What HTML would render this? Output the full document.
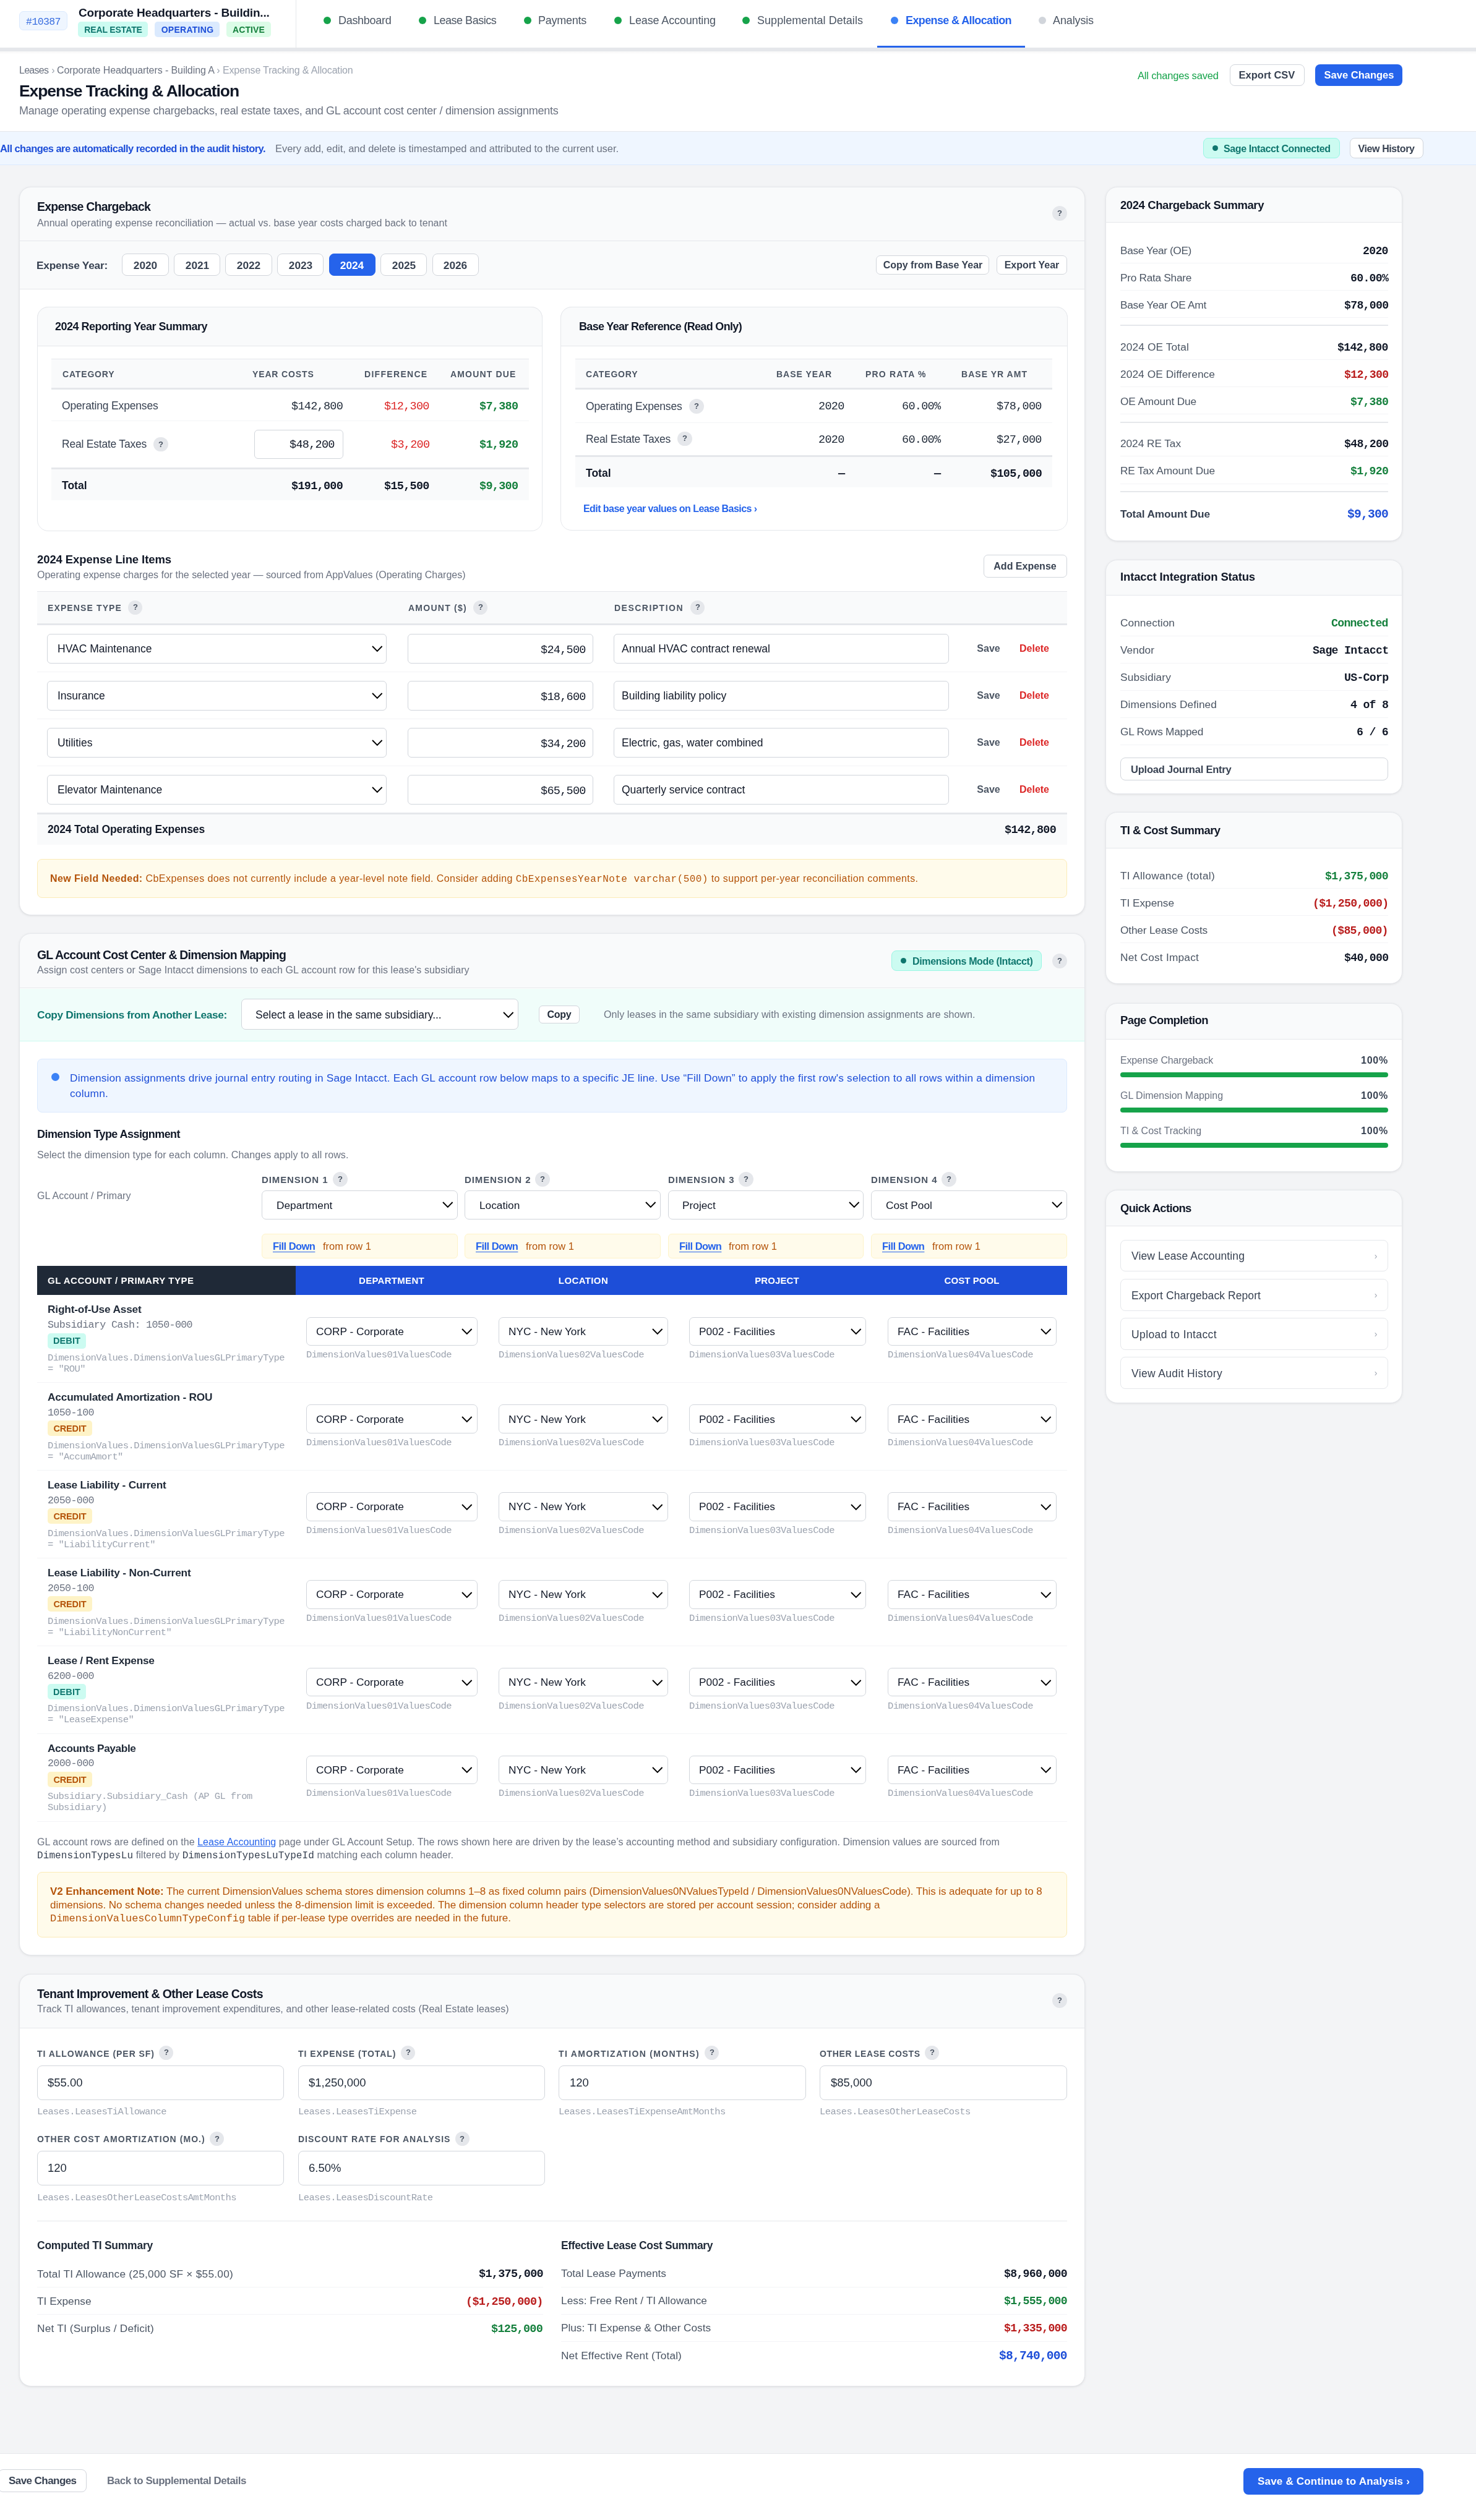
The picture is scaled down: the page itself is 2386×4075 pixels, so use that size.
<!DOCTYPE html>
<html><head><meta charset="utf-8"><title>Expense Tracking &amp; Allocation</title>
<style>
html,body{margin:0;padding:0;}
body{width:2386px;height:4075px;position:relative;overflow:hidden;background:#f3f4f6;font-family:'Liberation Sans', sans-serif;}
.a{position:absolute;box-sizing:border-box;}
.t{will-change:transform;}

</style></head><body>
<div class="a" style="left:0px;top:0px;width:2386px;height:77px;background:#ffffff;"></div>
<div class="a" style="left:0px;top:77px;width:2386px;height:6px;background:#e5e7eb;"></div>
<div class="a" style="left:31px;top:18px;width:78px;height:31px;background:#eff6ff;border:1px solid #dbeafe;border-radius:7px;"></div>
<div class="a t" style="top:25.00px;font-family:'Liberation Mono', monospace;font-size:16.59px;line-height:22px;font-weight:400;color:#3b6fe0;white-space:nowrap;letter-spacing:-0.6510000000000005px;left:-930px;width:2000px;text-align:center;">#10387</div>
<div class="a t" style="top:8.00px;font-family:'Liberation Sans', sans-serif;font-size:19px;line-height:25px;font-weight:700;color:#111827;white-space:nowrap;left:127px;letter-spacing:-0.202px;">Corporate Headquarters - Buildin...</div>
<div class="a" style="left:126px;top:35px;width:113px;height:25px;background:#ccfbf1;border-radius:5px;"></div>
<div class="a t" style="top:39.00px;font-family:'Liberation Sans', sans-serif;font-size:14px;line-height:18px;font-weight:700;color:#0f766e;white-space:nowrap;left:-817.5px;width:2000px;text-align:center;letter-spacing:-0.119px;">REAL ESTATE</div>
<div class="a" style="left:250px;top:35px;width:105px;height:25px;background:#dbeafe;border-radius:5px;"></div>
<div class="a t" style="top:39.00px;font-family:'Liberation Sans', sans-serif;font-size:14px;line-height:18px;font-weight:700;color:#1d4ed8;white-space:nowrap;left:-697.5px;width:2000px;text-align:center;letter-spacing:0.277px;">OPERATING</div>
<div class="a" style="left:366px;top:35px;width:72px;height:25px;background:#dcfce7;border-radius:5px;"></div>
<div class="a t" style="top:39.00px;font-family:'Liberation Sans', sans-serif;font-size:14px;line-height:18px;font-weight:700;color:#15803d;white-space:nowrap;left:-598.0px;width:2000px;text-align:center;letter-spacing:0.109px;">ACTIVE</div>
<div class="a" style="left:478px;top:0px;width:1px;height:77px;background:#e5e7eb;"></div>
<div class="a" style="left:523.0px;top:26.5px;width:12.0px;height:12.0px;background:#16a34a;border-radius:12px;"></div>
<div class="a t" style="top:22.00px;font-family:'Liberation Sans', sans-serif;font-size:18px;line-height:23px;font-weight:400;color:#4b5563;white-space:nowrap;left:546.5px;letter-spacing:-0.296px;">Dashboard</div>
<div class="a" style="left:677.4px;top:26.5px;width:12.0px;height:12.0px;background:#16a34a;border-radius:12px;"></div>
<div class="a t" style="top:22.00px;font-family:'Liberation Sans', sans-serif;font-size:18px;line-height:23px;font-weight:400;color:#4b5563;white-space:nowrap;left:700.9px;letter-spacing:-0.489px;">Lease Basics</div>
<div class="a" style="left:846.5px;top:26.5px;width:12.0px;height:12.0px;background:#16a34a;border-radius:12px;"></div>
<div class="a t" style="top:22.00px;font-family:'Liberation Sans', sans-serif;font-size:18px;line-height:23px;font-weight:400;color:#4b5563;white-space:nowrap;left:870.0px;letter-spacing:-0.256px;">Payments</div>
<div class="a" style="left:993.0px;top:26.5px;width:12.0px;height:12.0px;background:#16a34a;border-radius:12px;"></div>
<div class="a t" style="top:22.00px;font-family:'Liberation Sans', sans-serif;font-size:18px;line-height:23px;font-weight:400;color:#4b5563;white-space:nowrap;left:1016.5px;letter-spacing:-0.133px;">Lease Accounting</div>
<div class="a" style="left:1200.0px;top:26.5px;width:12.0px;height:12.0px;background:#16a34a;border-radius:12px;"></div>
<div class="a t" style="top:22.00px;font-family:'Liberation Sans', sans-serif;font-size:18px;line-height:23px;font-weight:400;color:#4b5563;white-space:nowrap;left:1223.5px;letter-spacing:0.045px;">Supplemental Details</div>
<div class="a" style="left:1440.0px;top:26.5px;width:12.0px;height:12.0px;background:#3b82f6;border-radius:12px;"></div>
<div class="a t" style="top:22.00px;font-family:'Liberation Sans', sans-serif;font-size:18px;line-height:23px;font-weight:700;color:#2563eb;white-space:nowrap;left:1463.5px;letter-spacing:-0.619px;">Expense &amp; Allocation</div>
<div class="a" style="left:1678.5px;top:26.5px;width:12.0px;height:12.0px;background:#d1d5db;border-radius:12px;"></div>
<div class="a t" style="top:22.00px;font-family:'Liberation Sans', sans-serif;font-size:18px;line-height:23px;font-weight:400;color:#4b5563;white-space:nowrap;left:1702.0px;letter-spacing:-0.129px;">Analysis</div>
<div class="a" style="left:1418px;top:74px;width:239px;height:3px;background:#2563eb;"></div>
<div class="a" style="left:0px;top:83px;width:2386px;height:129px;background:#ffffff;"></div>
<div class="a" style="left:0px;top:83px;width:2386px;height:5px;background:linear-gradient(rgba(0,0,0,0.03),rgba(0,0,0,0));"></div>
<div class="a" style="left:0px;top:212px;width:2386px;height:1px;background:#e5e7eb;"></div>
<div class="a t" style="top:103.00px;font-family:'Liberation Sans', sans-serif;font-size:16px;line-height:21px;font-weight:400;color:#6b7280;white-space:nowrap;left:31.3px;letter-spacing:-0.732px;">Leases</div>
<div class="a t" style="top:103.00px;font-family:'Liberation Sans', sans-serif;font-size:16px;line-height:21px;font-weight:400;color:#9ca3af;white-space:nowrap;left:-914.5px;width:2000px;text-align:center;">›</div>
<div class="a t" style="top:103.00px;font-family:'Liberation Sans', sans-serif;font-size:16px;line-height:21px;font-weight:400;color:#6b7280;white-space:nowrap;left:91.5px;letter-spacing:-0.089px;">Corporate Headquarters - Building A</div>
<div class="a t" style="top:103.00px;font-family:'Liberation Sans', sans-serif;font-size:16px;line-height:21px;font-weight:400;color:#9ca3af;white-space:nowrap;left:-647.2px;width:2000px;text-align:center;">›</div>
<div class="a t" style="top:103.00px;font-family:'Liberation Sans', sans-serif;font-size:16px;line-height:21px;font-weight:400;color:#9ca3af;white-space:nowrap;left:359.8px;letter-spacing:-0.163px;">Expense Tracking &amp; Allocation</div>
<div class="a t" style="top:130.00px;font-family:'Liberation Sans', sans-serif;font-size:26.5px;line-height:34px;font-weight:700;color:#111827;white-space:nowrap;left:31px;letter-spacing:-1.080px;">Expense Tracking &amp; Allocation</div>
<div class="a t" style="top:168.00px;font-family:'Liberation Sans', sans-serif;font-size:18px;line-height:23px;font-weight:400;color:#6b7280;white-space:nowrap;left:31px;letter-spacing:-0.266px;">Manage operating expense chargebacks, real estate taxes, and GL account cost center / dimension assignments</div>
<div class="a t" style="top:112.00px;font-family:'Liberation Sans', sans-serif;font-size:16.5px;line-height:21px;font-weight:400;color:#16a34a;white-space:nowrap;left:1839px;letter-spacing:-0.190px;">All changes saved</div>
<div class="a" style="left:1987.5px;top:103.7px;width:121.0px;height:35.7px;background:#fff;border:1px solid #d1d5db;border-radius:8px;"></div>
<div class="a t" style="top:111.00px;font-family:'Liberation Sans', sans-serif;font-size:16.5px;line-height:21px;font-weight:700;color:#374151;white-space:nowrap;left:1048px;width:2000px;text-align:center;">Export CSV</div>
<div class="a" style="left:2126px;top:104px;width:141px;height:35px;background:#2563eb;border-radius:8px;"></div>
<div class="a t" style="top:111.00px;font-family:'Liberation Sans', sans-serif;font-size:16.5px;line-height:21px;font-weight:700;color:#fff;white-space:nowrap;left:1196.5px;width:2000px;text-align:center;">Save Changes</div>
<div class="a" style="left:0px;top:213px;width:2386px;height:54px;background:#eff6ff;"></div>
<div class="a" style="left:0px;top:266px;width:2386px;height:1px;background:#dbeafe;"></div>
<div class="a t" style="top:230.00px;font-family:'Liberation Sans', sans-serif;font-size:16.5px;line-height:21px;font-weight:700;color:#1d4ed8;white-space:nowrap;left:0px;letter-spacing:-0.562px;">All changes are automatically recorded in the audit history.</div>
<div class="a t" style="top:230.00px;font-family:'Liberation Sans', sans-serif;font-size:16.5px;line-height:21px;font-weight:400;color:#6b7280;white-space:nowrap;left:444.8px;letter-spacing:-0.058px;">Every add, edit, and delete is timestamped and attributed to the current user.</div>
<div class="a" style="left:1945px;top:223px;width:221px;height:32.5px;background:#ccfbf1;border:1px solid #99f6e4;border-radius:8px;"></div>
<div class="a" style="left:1959.5px;top:235.0px;width:9.0px;height:9.0px;background:#0f766e;border-radius:9px;"></div>
<div class="a t" style="top:230.00px;font-family:'Liberation Sans', sans-serif;font-size:16px;line-height:21px;font-weight:700;color:#0f766e;white-space:nowrap;left:1978px;letter-spacing:-0.403px;">Sage Intacct Connected</div>
<div class="a" style="left:2182px;top:223px;width:118.5px;height:32.5px;background:#fff;border:1px solid #d1d5db;border-radius:8px;"></div>
<div class="a t" style="top:230.00px;font-family:'Liberation Sans', sans-serif;font-size:16px;line-height:21px;font-weight:700;color:#374151;white-space:nowrap;left:1241px;width:2000px;text-align:center;letter-spacing:-0.396px;">View History</div>
<div class="a" style="left:31px;top:302px;width:1723px;height:1178px;background:#fff;border:1px solid #e5e7eb;border-radius:19px;box-shadow:0 1px 4px rgba(0,0,0,0.07),0 1px 2px rgba(0,0,0,0.03);"></div>
<div class="a" style="left:31px;top:302px;width:1723px;height:88px;background:#f9fafb;border:1px solid #e5e7eb;border-radius:19px;border-bottom-left-radius:0;border-bottom-right-radius:0;"></div>
<div class="a t" style="top:322.00px;font-family:'Liberation Sans', sans-serif;font-size:19.5px;line-height:25px;font-weight:700;color:#111827;white-space:nowrap;left:60px;letter-spacing:-0.793px;">Expense Chargeback</div>
<div class="a t" style="top:350.00px;font-family:'Liberation Sans', sans-serif;font-size:16px;line-height:21px;font-weight:400;color:#6b7280;white-space:nowrap;left:60px;letter-spacing:0.033px;">Annual operating expense reconciliation — actual vs. base year costs charged back to tenant</div>
<div class="a" style="left:1700.6px;top:332.6px;width:24.0px;height:24.0px;background:#e5e7eb;border-radius:24px;"></div>
<div class="a t" style="top:336.00px;font-family:'Liberation Sans', sans-serif;font-size:13px;line-height:17px;font-weight:700;color:#4b5563;white-space:nowrap;left:712.5999999999999px;width:2000px;text-align:center;">?</div>
<div class="a" style="left:32px;top:390px;width:1721px;height:78px;background:#f9fafb;"></div>
<div class="a" style="left:32px;top:467px;width:1721px;height:1px;background:#e5e7eb;"></div>
<div class="a t" style="top:418.00px;font-family:'Liberation Sans', sans-serif;font-size:17.3px;line-height:22px;font-weight:700;color:#374151;white-space:nowrap;left:59.3px;letter-spacing:-0.220px;">Expense Year:</div>
<div class="a" style="left:197.3px;top:409.8px;width:75.40000000000003px;height:36.5px;background:#fff;border:1px solid #d1d5db;border-radius:8px;"></div>
<div class="a t" style="top:418.00px;font-family:'Liberation Sans', sans-serif;font-size:17.3px;line-height:22px;font-weight:600;color:#374151;white-space:nowrap;left:-765.0px;width:2000px;text-align:center;">2020</div>
<div class="a" style="left:280.85px;top:409.8px;width:75.39999999999998px;height:36.5px;background:#fff;border:1px solid #d1d5db;border-radius:8px;"></div>
<div class="a t" style="top:418.00px;font-family:'Liberation Sans', sans-serif;font-size:17.3px;line-height:22px;font-weight:600;color:#374151;white-space:nowrap;left:-681.45px;width:2000px;text-align:center;">2021</div>
<div class="a" style="left:364.4px;top:409.8px;width:75.39999999999998px;height:36.5px;background:#fff;border:1px solid #d1d5db;border-radius:8px;"></div>
<div class="a t" style="top:418.00px;font-family:'Liberation Sans', sans-serif;font-size:17.3px;line-height:22px;font-weight:600;color:#374151;white-space:nowrap;left:-597.9000000000001px;width:2000px;text-align:center;">2022</div>
<div class="a" style="left:447.95px;top:409.8px;width:75.40000000000003px;height:36.5px;background:#fff;border:1px solid #d1d5db;border-radius:8px;"></div>
<div class="a t" style="top:418.00px;font-family:'Liberation Sans', sans-serif;font-size:17.3px;line-height:22px;font-weight:600;color:#374151;white-space:nowrap;left:-514.35px;width:2000px;text-align:center;">2023</div>
<div class="a" style="left:531.5px;top:409.8px;width:75.39999999999998px;height:36.5px;background:#2563eb;border:1px solid #2563eb;border-radius:8px;"></div>
<div class="a t" style="top:418.00px;font-family:'Liberation Sans', sans-serif;font-size:17.3px;line-height:22px;font-weight:600;color:#fff;white-space:nowrap;left:-430.79999999999995px;width:2000px;text-align:center;">2024</div>
<div class="a" style="left:615.05px;top:409.8px;width:75.39999999999998px;height:36.5px;background:#fff;border:1px solid #d1d5db;border-radius:8px;"></div>
<div class="a t" style="top:418.00px;font-family:'Liberation Sans', sans-serif;font-size:17.3px;line-height:22px;font-weight:600;color:#374151;white-space:nowrap;left:-347.25px;width:2000px;text-align:center;">2025</div>
<div class="a" style="left:698.5999999999999px;top:409.8px;width:75.39999999999998px;height:36.5px;background:#fff;border:1px solid #d1d5db;border-radius:8px;"></div>
<div class="a t" style="top:418.00px;font-family:'Liberation Sans', sans-serif;font-size:17.3px;line-height:22px;font-weight:600;color:#374151;white-space:nowrap;left:-263.70000000000005px;width:2000px;text-align:center;">2026</div>
<div class="a" style="left:1416px;top:413px;width:183px;height:30.5px;background:#fff;border:1px solid #d1d5db;border-radius:7px;"></div>
<div class="a t" style="top:418.00px;font-family:'Liberation Sans', sans-serif;font-size:16px;line-height:21px;font-weight:700;color:#374151;white-space:nowrap;left:507.5px;width:2000px;text-align:center;">Copy from Base Year</div>
<div class="a" style="left:1611px;top:413px;width:113.70000000000005px;height:30.5px;background:#fff;border:1px solid #d1d5db;border-radius:7px;"></div>
<div class="a t" style="top:418.00px;font-family:'Liberation Sans', sans-serif;font-size:16px;line-height:21px;font-weight:700;color:#374151;white-space:nowrap;left:667.8499999999999px;width:2000px;text-align:center;">Export Year</div>
<div class="a" style="left:60px;top:496px;width:817px;height:363px;background:#fff;border:1px solid #e5e7eb;border-radius:18px;"></div>
<div class="a" style="left:60px;top:496px;width:817px;height:64px;background:#f9fafb;border:1px solid #e5e7eb;border-radius:18px;border-bottom-left-radius:0;border-bottom-right-radius:0;"></div>
<div class="a t" style="top:517.00px;font-family:'Liberation Sans', sans-serif;font-size:18px;line-height:23px;font-weight:700;color:#111827;white-space:nowrap;left:89px;letter-spacing:-0.511px;">2024 Reporting Year Summary</div>
<div class="a" style="left:83px;top:580px;width:772px;height:47px;background:#f9fafb;"></div>
<div class="a" style="left:83px;top:580px;width:772px;height:1px;background:#e5e7eb;"></div>
<div class="a" style="left:83px;top:627px;width:772px;height:3px;background:#e5e7eb;"></div>
<div class="a t" style="top:596.00px;font-family:'Liberation Sans', sans-serif;font-size:14px;line-height:18px;font-weight:700;color:#4b5563;white-space:nowrap;left:100.6px;letter-spacing:0.827px;">CATEGORY</div>
<div class="a t" style="top:596.00px;font-family:'Liberation Sans', sans-serif;font-size:14px;line-height:18px;font-weight:700;color:#4b5563;white-space:nowrap;left:408.4px;letter-spacing:0.858px;">YEAR COSTS</div>
<div class="a t" style="top:596.00px;font-family:'Liberation Sans', sans-serif;font-size:14px;line-height:18px;font-weight:700;color:#4b5563;white-space:nowrap;left:588.8px;letter-spacing:1.305px;">DIFFERENCE</div>
<div class="a t" style="top:596.00px;font-family:'Liberation Sans', sans-serif;font-size:14px;line-height:18px;font-weight:700;color:#4b5563;white-space:nowrap;left:728.4px;letter-spacing:1.171px;">AMOUNT DUE</div>
<div class="a t" style="top:645.00px;font-family:'Liberation Sans', sans-serif;font-size:17.5px;line-height:23px;font-weight:400;color:#374151;white-space:nowrap;left:100.3px;letter-spacing:-0.165px;">Operating Expenses</div>
<div class="a t" style="top:646.00px;font-family:'Liberation Mono', monospace;font-size:18.54px;line-height:24px;font-weight:400;color:#1f2937;white-space:nowrap;letter-spacing:-0.7278600000000004px;right:1831.4px;">$142,800</div>
<div class="a t" style="top:646.00px;font-family:'Liberation Mono', monospace;font-size:18.54px;line-height:24px;font-weight:400;color:#dc2626;white-space:nowrap;letter-spacing:-0.7278600000000004px;right:1692px;">$12,300</div>
<div class="a t" style="top:646.00px;font-family:'Liberation Mono', monospace;font-size:18.54px;line-height:24px;font-weight:700;color:#15803d;white-space:nowrap;letter-spacing:-0.7278600000000004px;right:1548.5px;">$7,380</div>
<div class="a" style="left:83px;top:680px;width:772px;height:1px;background:#f3f4f6;"></div>
<div class="a t" style="top:707.00px;font-family:'Liberation Sans', sans-serif;font-size:17.5px;line-height:23px;font-weight:400;color:#374151;white-space:nowrap;left:100.3px;letter-spacing:-0.220px;">Real Estate Taxes</div>
<div class="a" style="left:248.09999999999997px;top:706.9000000000001px;width:23.600000000000023px;height:23.59999999999991px;background:#e5e7eb;border-radius:23.6px;"></div>
<div class="a t" style="top:710.00px;font-family:'Liberation Sans', sans-serif;font-size:13px;line-height:17px;font-weight:700;color:#4b5563;white-space:nowrap;left:-740.1px;width:2000px;text-align:center;">?</div>
<div class="a" style="left:411.3px;top:695px;width:143.3px;height:47.299999999999955px;background:#fff;border:1px solid #d1d5db;border-radius:6px;"></div>
<div class="a t" style="top:708.00px;font-family:'Liberation Mono', monospace;font-size:18.54px;line-height:24px;font-weight:400;color:#111827;white-space:nowrap;letter-spacing:-0.7278600000000004px;right:1845px;">$48,200</div>
<div class="a t" style="top:708.00px;font-family:'Liberation Mono', monospace;font-size:18.54px;line-height:24px;font-weight:400;color:#dc2626;white-space:nowrap;letter-spacing:-0.7278600000000004px;right:1692px;">$3,200</div>
<div class="a t" style="top:708.00px;font-family:'Liberation Mono', monospace;font-size:18.54px;line-height:24px;font-weight:700;color:#15803d;white-space:nowrap;letter-spacing:-0.7278600000000004px;right:1548.5px;">$1,920</div>
<div class="a" style="left:83px;top:756px;width:772px;height:53px;background:#f9fafb;"></div>
<div class="a" style="left:83px;top:756px;width:772px;height:3px;background:#e5e7eb;"></div>
<div class="a t" style="top:774.00px;font-family:'Liberation Sans', sans-serif;font-size:17.5px;line-height:23px;font-weight:700;color:#111827;white-space:nowrap;left:100.3px;">Total</div>
<div class="a t" style="top:775.00px;font-family:'Liberation Mono', monospace;font-size:18.54px;line-height:24px;font-weight:700;color:#111827;white-space:nowrap;letter-spacing:-0.7278600000000004px;right:1831.4px;">$191,000</div>
<div class="a t" style="top:775.00px;font-family:'Liberation Mono', monospace;font-size:18.54px;line-height:24px;font-weight:700;color:#111827;white-space:nowrap;letter-spacing:-0.7278600000000004px;right:1692px;">$15,500</div>
<div class="a t" style="top:775.00px;font-family:'Liberation Mono', monospace;font-size:18.54px;line-height:24px;font-weight:700;color:#15803d;white-space:nowrap;letter-spacing:-0.7278600000000004px;right:1548.5px;">$9,300</div>
<div class="a" style="left:906px;top:496px;width:819.5px;height:361.5px;background:#fff;border:1px solid #e5e7eb;border-radius:18px;"></div>
<div class="a" style="left:906px;top:496px;width:819.5px;height:64px;background:#f9fafb;border:1px solid #e5e7eb;border-radius:18px;border-bottom-left-radius:0;border-bottom-right-radius:0;"></div>
<div class="a t" style="top:517.00px;font-family:'Liberation Sans', sans-serif;font-size:18px;line-height:23px;font-weight:700;color:#111827;white-space:nowrap;left:936px;letter-spacing:-0.671px;">Base Year Reference (Read Only)</div>
<div class="a" style="left:930px;top:580px;width:771px;height:47px;background:#f9fafb;"></div>
<div class="a" style="left:930px;top:580px;width:771px;height:1px;background:#e5e7eb;"></div>
<div class="a" style="left:930px;top:627px;width:771px;height:3px;background:#e5e7eb;"></div>
<div class="a t" style="top:596.00px;font-family:'Liberation Sans', sans-serif;font-size:14px;line-height:18px;font-weight:700;color:#4b5563;white-space:nowrap;left:946.6px;letter-spacing:0.827px;">CATEGORY</div>
<div class="a t" style="top:596.00px;font-family:'Liberation Sans', sans-serif;font-size:14px;line-height:18px;font-weight:700;color:#4b5563;white-space:nowrap;left:1254.8px;letter-spacing:0.974px;">BASE YEAR</div>
<div class="a t" style="top:596.00px;font-family:'Liberation Sans', sans-serif;font-size:14px;line-height:18px;font-weight:700;color:#4b5563;white-space:nowrap;left:1399px;letter-spacing:1.184px;">PRO RATA %</div>
<div class="a t" style="top:596.00px;font-family:'Liberation Sans', sans-serif;font-size:14px;line-height:18px;font-weight:700;color:#4b5563;white-space:nowrap;left:1554px;letter-spacing:1.028px;">BASE YR AMT</div>
<div class="a t" style="top:646.00px;font-family:'Liberation Sans', sans-serif;font-size:17.5px;line-height:23px;font-weight:400;color:#374151;white-space:nowrap;left:946.6px;letter-spacing:-0.165px;">Operating Expenses</div>
<div class="a" style="left:1114.0px;top:645.0px;width:23.59999999999991px;height:23.59999999999991px;background:#e5e7eb;border-radius:23.6px;"></div>
<div class="a t" style="top:648.00px;font-family:'Liberation Sans', sans-serif;font-size:13px;line-height:17px;font-weight:700;color:#4b5563;white-space:nowrap;left:125.79999999999995px;width:2000px;text-align:center;">?</div>
<div class="a t" style="top:646.00px;font-family:'Liberation Mono', monospace;font-size:18.54px;line-height:24px;font-weight:400;color:#1f2937;white-space:nowrap;letter-spacing:-0.7278600000000004px;right:1021px;">2020</div>
<div class="a t" style="top:646.00px;font-family:'Liberation Mono', monospace;font-size:18.54px;line-height:24px;font-weight:400;color:#1f2937;white-space:nowrap;letter-spacing:-0.7278600000000004px;right:866px;">60.00%</div>
<div class="a t" style="top:646.00px;font-family:'Liberation Mono', monospace;font-size:18.54px;line-height:24px;font-weight:400;color:#1f2937;white-space:nowrap;letter-spacing:-0.7278600000000004px;right:702px;">$78,000</div>
<div class="a" style="left:930px;top:683px;width:771px;height:1px;background:#f3f4f6;"></div>
<div class="a t" style="top:699.00px;font-family:'Liberation Sans', sans-serif;font-size:17.5px;line-height:23px;font-weight:400;color:#374151;white-space:nowrap;left:946.6px;letter-spacing:-0.220px;">Real Estate Taxes</div>
<div class="a" style="left:1095.1000000000001px;top:697.5px;width:23.59999999999991px;height:23.59999999999991px;background:#e5e7eb;border-radius:23.6px;"></div>
<div class="a t" style="top:700.00px;font-family:'Liberation Sans', sans-serif;font-size:13px;line-height:17px;font-weight:700;color:#4b5563;white-space:nowrap;left:106.90000000000009px;width:2000px;text-align:center;">?</div>
<div class="a t" style="top:700.00px;font-family:'Liberation Mono', monospace;font-size:18.54px;line-height:24px;font-weight:400;color:#1f2937;white-space:nowrap;letter-spacing:-0.7278600000000004px;right:1021px;">2020</div>
<div class="a t" style="top:700.00px;font-family:'Liberation Mono', monospace;font-size:18.54px;line-height:24px;font-weight:400;color:#1f2937;white-space:nowrap;letter-spacing:-0.7278600000000004px;right:866px;">60.00%</div>
<div class="a t" style="top:700.00px;font-family:'Liberation Mono', monospace;font-size:18.54px;line-height:24px;font-weight:400;color:#1f2937;white-space:nowrap;letter-spacing:-0.7278600000000004px;right:702px;">$27,000</div>
<div class="a" style="left:930px;top:736px;width:771px;height:52px;background:#f9fafb;"></div>
<div class="a" style="left:930px;top:736px;width:771px;height:3px;background:#e5e7eb;"></div>
<div class="a t" style="top:754.00px;font-family:'Liberation Sans', sans-serif;font-size:17.5px;line-height:23px;font-weight:700;color:#111827;white-space:nowrap;left:946.6px;">Total</div>
<div class="a t" style="top:755.00px;font-family:'Liberation Mono', monospace;font-size:18.54px;line-height:24px;font-weight:700;color:#111827;white-space:nowrap;letter-spacing:-0.7278600000000004px;right:1021px;">—</div>
<div class="a t" style="top:755.00px;font-family:'Liberation Mono', monospace;font-size:18.54px;line-height:24px;font-weight:700;color:#111827;white-space:nowrap;letter-spacing:-0.7278600000000004px;right:866px;">—</div>
<div class="a t" style="top:755.00px;font-family:'Liberation Mono', monospace;font-size:18.54px;line-height:24px;font-weight:700;color:#111827;white-space:nowrap;letter-spacing:-0.7278600000000004px;right:702px;">$105,000</div>
<div class="a t" style="top:812.00px;font-family:'Liberation Sans', sans-serif;font-size:16px;line-height:21px;font-weight:700;color:#2563eb;white-space:nowrap;left:942.5px;letter-spacing:-0.561px;">Edit base year values on Lease Basics ›</div>
<div class="a t" style="top:893.00px;font-family:'Liberation Sans', sans-serif;font-size:18.5px;line-height:24px;font-weight:700;color:#111827;white-space:nowrap;left:60px;letter-spacing:-0.088px;">2024 Expense Line Items</div>
<div class="a t" style="top:919.00px;font-family:'Liberation Sans', sans-serif;font-size:16px;line-height:21px;font-weight:400;color:#6b7280;white-space:nowrap;left:60px;letter-spacing:-0.020px;">Operating expense charges for the selected year — sourced from AppValues (Operating Charges)</div>
<div class="a" style="left:1589.6px;top:897px;width:135.0px;height:36.700000000000045px;background:#fff;border:1px solid #d1d5db;border-radius:7px;"></div>
<div class="a t" style="top:905.00px;font-family:'Liberation Sans', sans-serif;font-size:16px;line-height:21px;font-weight:700;color:#374151;white-space:nowrap;left:657.0999999999999px;width:2000px;text-align:center;">Add Expense</div>
<div class="a" style="left:60px;top:956px;width:1664.6px;height:52px;background:#f9fafb;"></div>
<div class="a" style="left:60px;top:956px;width:1664.6px;height:1px;background:#e5e7eb;"></div>
<div class="a" style="left:60px;top:1008px;width:1664.6px;height:3px;background:#e5e7eb;"></div>
<div class="a t" style="top:974.00px;font-family:'Liberation Sans', sans-serif;font-size:14px;line-height:18px;font-weight:700;color:#4b5563;white-space:nowrap;left:77px;letter-spacing:1.117px;">EXPENSE TYPE</div>
<div class="a" style="left:206.79999999999998px;top:970.7px;width:23.600000000000023px;height:23.59999999999991px;background:#e5e7eb;border-radius:23.6px;"></div>
<div class="a t" style="top:973.00px;font-family:'Liberation Sans', sans-serif;font-size:13px;line-height:17px;font-weight:700;color:#4b5563;white-space:nowrap;left:-781.4px;width:2000px;text-align:center;">?</div>
<div class="a t" style="top:974.00px;font-family:'Liberation Sans', sans-serif;font-size:14px;line-height:18px;font-weight:700;color:#4b5563;white-space:nowrap;left:659.5px;letter-spacing:1.256px;">AMOUNT ($)</div>
<div class="a" style="left:764.8000000000001px;top:970.7px;width:23.59999999999991px;height:23.59999999999991px;background:#e5e7eb;border-radius:23.6px;"></div>
<div class="a t" style="top:973.00px;font-family:'Liberation Sans', sans-serif;font-size:13px;line-height:17px;font-weight:700;color:#4b5563;white-space:nowrap;left:-223.39999999999998px;width:2000px;text-align:center;">?</div>
<div class="a t" style="top:974.00px;font-family:'Liberation Sans', sans-serif;font-size:14px;line-height:18px;font-weight:700;color:#4b5563;white-space:nowrap;left:992.6px;letter-spacing:1.483px;">DESCRIPTION</div>
<div class="a" style="left:1115.8px;top:970.7px;width:23.59999999999991px;height:23.59999999999991px;background:#e5e7eb;border-radius:23.6px;"></div>
<div class="a t" style="top:973.00px;font-family:'Liberation Sans', sans-serif;font-size:13px;line-height:17px;font-weight:700;color:#4b5563;white-space:nowrap;left:127.59999999999991px;width:2000px;text-align:center;">?</div>
<div class="a" style="left:76px;top:1025px;width:549.3px;height:48px;background:#fff;border:1px solid #d1d5db;border-radius:6px;"></div>
<div class="a t" style="top:1038.00px;font-family:'Liberation Sans', sans-serif;font-size:17.5px;line-height:23px;font-weight:400;color:#111827;white-space:nowrap;left:92.5px;">HVAC Maintenance</div>
<svg class="a" style="left:599.0px;top:1041.6999999999998px" width="21.6" height="13.8"><polyline points="3,3 10.8,10.8 18.6,3" fill="none" stroke="#000" stroke-width="1.9" stroke-linecap="butt" stroke-linejoin="miter"/></svg>
<div class="a" style="left:659px;top:1025px;width:300px;height:48px;background:#fff;border:1px solid #d1d5db;border-radius:6px;"></div>
<div class="a t" style="top:1040.00px;font-family:'Liberation Mono', monospace;font-size:18.54px;line-height:24px;font-weight:400;color:#111827;white-space:nowrap;letter-spacing:-0.7278600000000004px;right:1439.4px;">$24,500</div>
<div class="a" style="left:992px;top:1025px;width:541.5999999999999px;height:48px;background:#fff;border:1px solid #d1d5db;border-radius:6px;"></div>
<div class="a t" style="top:1038.00px;font-family:'Liberation Sans', sans-serif;font-size:17.5px;line-height:23px;font-weight:400;color:#111827;white-space:nowrap;left:1004.8px;">Annual HVAC contract renewal</div>
<div class="a t" style="top:1038.00px;font-family:'Liberation Sans', sans-serif;font-size:16px;line-height:21px;font-weight:700;color:#4b5563;white-space:nowrap;left:597.5999999999999px;width:2000px;text-align:center;">Save</div>
<div class="a t" style="top:1038.00px;font-family:'Liberation Sans', sans-serif;font-size:16px;line-height:21px;font-weight:700;color:#dc2626;white-space:nowrap;left:671.8px;width:2000px;text-align:center;">Delete</div>
<div class="a" style="left:60px;top:1086.3px;width:1664.6px;height:1.0px;background:#f3f4f6;"></div>
<div class="a" style="left:76px;top:1101px;width:549.3px;height:48px;background:#fff;border:1px solid #d1d5db;border-radius:6px;"></div>
<div class="a t" style="top:1114.00px;font-family:'Liberation Sans', sans-serif;font-size:17.5px;line-height:23px;font-weight:400;color:#111827;white-space:nowrap;left:92.5px;">Insurance</div>
<svg class="a" style="left:599.0px;top:1117.6999999999998px" width="21.6" height="13.8"><polyline points="3,3 10.8,10.8 18.6,3" fill="none" stroke="#000" stroke-width="1.9" stroke-linecap="butt" stroke-linejoin="miter"/></svg>
<div class="a" style="left:659px;top:1101px;width:300px;height:48px;background:#fff;border:1px solid #d1d5db;border-radius:6px;"></div>
<div class="a t" style="top:1116.00px;font-family:'Liberation Mono', monospace;font-size:18.54px;line-height:24px;font-weight:400;color:#111827;white-space:nowrap;letter-spacing:-0.7278600000000004px;right:1439.4px;">$18,600</div>
<div class="a" style="left:992px;top:1101px;width:541.5999999999999px;height:48px;background:#fff;border:1px solid #d1d5db;border-radius:6px;"></div>
<div class="a t" style="top:1114.00px;font-family:'Liberation Sans', sans-serif;font-size:17.5px;line-height:23px;font-weight:400;color:#111827;white-space:nowrap;left:1004.8px;">Building liability policy</div>
<div class="a t" style="top:1114.00px;font-family:'Liberation Sans', sans-serif;font-size:16px;line-height:21px;font-weight:700;color:#4b5563;white-space:nowrap;left:597.5999999999999px;width:2000px;text-align:center;">Save</div>
<div class="a t" style="top:1114.00px;font-family:'Liberation Sans', sans-serif;font-size:16px;line-height:21px;font-weight:700;color:#dc2626;white-space:nowrap;left:671.8px;width:2000px;text-align:center;">Delete</div>
<div class="a" style="left:60px;top:1162.3px;width:1664.6px;height:1.0px;background:#f3f4f6;"></div>
<div class="a" style="left:76px;top:1177px;width:549.3px;height:48px;background:#fff;border:1px solid #d1d5db;border-radius:6px;"></div>
<div class="a t" style="top:1190.00px;font-family:'Liberation Sans', sans-serif;font-size:17.5px;line-height:23px;font-weight:400;color:#111827;white-space:nowrap;left:92.5px;">Utilities</div>
<svg class="a" style="left:599.0px;top:1193.6999999999998px" width="21.6" height="13.8"><polyline points="3,3 10.8,10.8 18.6,3" fill="none" stroke="#000" stroke-width="1.9" stroke-linecap="butt" stroke-linejoin="miter"/></svg>
<div class="a" style="left:659px;top:1177px;width:300px;height:48px;background:#fff;border:1px solid #d1d5db;border-radius:6px;"></div>
<div class="a t" style="top:1192.00px;font-family:'Liberation Mono', monospace;font-size:18.54px;line-height:24px;font-weight:400;color:#111827;white-space:nowrap;letter-spacing:-0.7278600000000004px;right:1439.4px;">$34,200</div>
<div class="a" style="left:992px;top:1177px;width:541.5999999999999px;height:48px;background:#fff;border:1px solid #d1d5db;border-radius:6px;"></div>
<div class="a t" style="top:1190.00px;font-family:'Liberation Sans', sans-serif;font-size:17.5px;line-height:23px;font-weight:400;color:#111827;white-space:nowrap;left:1004.8px;">Electric, gas, water combined</div>
<div class="a t" style="top:1190.00px;font-family:'Liberation Sans', sans-serif;font-size:16px;line-height:21px;font-weight:700;color:#4b5563;white-space:nowrap;left:597.5999999999999px;width:2000px;text-align:center;">Save</div>
<div class="a t" style="top:1190.00px;font-family:'Liberation Sans', sans-serif;font-size:16px;line-height:21px;font-weight:700;color:#dc2626;white-space:nowrap;left:671.8px;width:2000px;text-align:center;">Delete</div>
<div class="a" style="left:60px;top:1238.3px;width:1664.6px;height:1.0px;background:#f3f4f6;"></div>
<div class="a" style="left:76px;top:1253px;width:549.3px;height:48px;background:#fff;border:1px solid #d1d5db;border-radius:6px;"></div>
<div class="a t" style="top:1266.00px;font-family:'Liberation Sans', sans-serif;font-size:17.5px;line-height:23px;font-weight:400;color:#111827;white-space:nowrap;left:92.5px;">Elevator Maintenance</div>
<svg class="a" style="left:599.0px;top:1269.6999999999998px" width="21.6" height="13.8"><polyline points="3,3 10.8,10.8 18.6,3" fill="none" stroke="#000" stroke-width="1.9" stroke-linecap="butt" stroke-linejoin="miter"/></svg>
<div class="a" style="left:659px;top:1253px;width:300px;height:48px;background:#fff;border:1px solid #d1d5db;border-radius:6px;"></div>
<div class="a t" style="top:1268.00px;font-family:'Liberation Mono', monospace;font-size:18.54px;line-height:24px;font-weight:400;color:#111827;white-space:nowrap;letter-spacing:-0.7278600000000004px;right:1439.4px;">$65,500</div>
<div class="a" style="left:992px;top:1253px;width:541.5999999999999px;height:48px;background:#fff;border:1px solid #d1d5db;border-radius:6px;"></div>
<div class="a t" style="top:1266.00px;font-family:'Liberation Sans', sans-serif;font-size:17.5px;line-height:23px;font-weight:400;color:#111827;white-space:nowrap;left:1004.8px;">Quarterly service contract</div>
<div class="a t" style="top:1266.00px;font-family:'Liberation Sans', sans-serif;font-size:16px;line-height:21px;font-weight:700;color:#4b5563;white-space:nowrap;left:597.5999999999999px;width:2000px;text-align:center;">Save</div>
<div class="a t" style="top:1266.00px;font-family:'Liberation Sans', sans-serif;font-size:16px;line-height:21px;font-weight:700;color:#dc2626;white-space:nowrap;left:671.8px;width:2000px;text-align:center;">Delete</div>
<div class="a" style="left:60px;top:1313.8px;width:1664.6px;height:51.90000000000009px;background:#f9fafb;"></div>
<div class="a" style="left:60px;top:1313.8px;width:1664.6px;height:3.0px;background:#e5e7eb;"></div>
<div class="a t" style="top:1330.00px;font-family:'Liberation Sans', sans-serif;font-size:17.5px;line-height:23px;font-weight:700;color:#111827;white-space:nowrap;left:77px;letter-spacing:-0.151px;">2024 Total Operating Expenses</div>
<div class="a t" style="top:1331.00px;font-family:'Liberation Mono', monospace;font-size:18.54px;line-height:24px;font-weight:700;color:#111827;white-space:nowrap;letter-spacing:-0.7278600000000004px;right:678.5px;">$142,800</div>
<div class="a" style="left:60px;top:1389px;width:1664.6px;height:63px;background:#fffbeb;border:1px solid #fcebb6;border-radius:8px;"></div>
<div class="a t" style="top:1410.00px;font-family:'Liberation Sans', sans-serif;font-size:16px;line-height:21px;font-weight:400;color:#b45309;white-space:nowrap;left:80.5px;letter-spacing:0.434px;"><b>New Field Needed:</b> CbExpenses does not currently include a year-level note field. Consider adding <span style="font-family:Liberation Mono">CbExpensesYearNote varchar(500)</span> to support per-year reconciliation comments.</div>
<div class="a" style="left:1787.4px;top:302px;width:479.5999999999999px;height:573px;background:#fff;border:1px solid #e5e7eb;border-radius:19px;box-shadow:0 1px 4px rgba(0,0,0,0.07),0 1px 2px rgba(0,0,0,0.03);"></div>
<div class="a" style="left:1787.4px;top:302px;width:479.5999999999999px;height:57.69999999999999px;background:#f9fafb;border:1px solid #e5e7eb;border-radius:19px;border-bottom-left-radius:0;border-bottom-right-radius:0;"></div>
<div class="a t" style="top:320.00px;font-family:'Liberation Sans', sans-serif;font-size:18.5px;line-height:24px;font-weight:700;color:#111827;white-space:nowrap;left:1811px;letter-spacing:-0.420px;">2024 Chargeback Summary</div>
<div class="a t" style="top:394.00px;font-family:'Liberation Sans', sans-serif;font-size:17.3px;line-height:22px;font-weight:400;color:#4b5563;white-space:nowrap;left:1811px;letter-spacing:-0.363px;">Base Year (OE)</div>
<div class="a t" style="top:394.00px;font-family:'Liberation Mono', monospace;font-size:18.19px;line-height:24px;font-weight:700;color:#111827;white-space:nowrap;letter-spacing:-0.7140000000000007px;right:142px;">2020</div>
<div class="a" style="left:1811px;top:425.2px;width:433px;height:1.0px;background:#f3f4f6;"></div>
<div class="a t" style="top:438.00px;font-family:'Liberation Sans', sans-serif;font-size:17.3px;line-height:22px;font-weight:400;color:#4b5563;white-space:nowrap;left:1811px;letter-spacing:-0.295px;">Pro Rata Share</div>
<div class="a t" style="top:438.00px;font-family:'Liberation Mono', monospace;font-size:18.19px;line-height:24px;font-weight:700;color:#111827;white-space:nowrap;letter-spacing:-0.7140000000000007px;right:142px;">60.00%</div>
<div class="a" style="left:1811px;top:468.8px;width:433px;height:1.0px;background:#f3f4f6;"></div>
<div class="a t" style="top:482.00px;font-family:'Liberation Sans', sans-serif;font-size:17.3px;line-height:22px;font-weight:400;color:#4b5563;white-space:nowrap;left:1811px;letter-spacing:-0.259px;">Base Year OE Amt</div>
<div class="a t" style="top:482.00px;font-family:'Liberation Mono', monospace;font-size:18.19px;line-height:24px;font-weight:700;color:#111827;white-space:nowrap;letter-spacing:-0.7140000000000007px;right:142px;">$78,000</div>
<div class="a" style="left:1811px;top:512.9px;width:433px;height:1.0px;background:#f3f4f6;"></div>
<div class="a" style="left:1811px;top:525px;width:433px;height:2px;background:#e5e7eb;"></div>
<div class="a t" style="top:550.00px;font-family:'Liberation Sans', sans-serif;font-size:17.3px;line-height:22px;font-weight:400;color:#4b5563;white-space:nowrap;left:1811px;letter-spacing:0.137px;">2024 OE Total</div>
<div class="a t" style="top:550.00px;font-family:'Liberation Mono', monospace;font-size:18.19px;line-height:24px;font-weight:700;color:#111827;white-space:nowrap;letter-spacing:-0.7140000000000007px;right:142px;">$142,800</div>
<div class="a" style="left:1811px;top:580.9px;width:433px;height:1.0px;background:#f3f4f6;"></div>
<div class="a t" style="top:594.00px;font-family:'Liberation Sans', sans-serif;font-size:17.3px;line-height:22px;font-weight:400;color:#4b5563;white-space:nowrap;left:1811px;letter-spacing:0.085px;">2024 OE Difference</div>
<div class="a t" style="top:594.00px;font-family:'Liberation Mono', monospace;font-size:18.19px;line-height:24px;font-weight:700;color:#b91c1c;white-space:nowrap;letter-spacing:-0.7140000000000007px;right:142px;">$12,300</div>
<div class="a" style="left:1811px;top:624.9px;width:433px;height:1.0px;background:#f3f4f6;"></div>
<div class="a t" style="top:638.00px;font-family:'Liberation Sans', sans-serif;font-size:17.3px;line-height:22px;font-weight:400;color:#4b5563;white-space:nowrap;left:1811px;letter-spacing:-0.145px;">OE Amount Due</div>
<div class="a t" style="top:638.00px;font-family:'Liberation Mono', monospace;font-size:18.19px;line-height:24px;font-weight:700;color:#15803d;white-space:nowrap;letter-spacing:-0.7140000000000007px;right:142px;">$7,380</div>
<div class="a" style="left:1811px;top:669.3px;width:433px;height:1.0px;background:#f3f4f6;"></div>
<div class="a" style="left:1811px;top:681.5px;width:433px;height:2.0px;background:#e5e7eb;"></div>
<div class="a t" style="top:706.00px;font-family:'Liberation Sans', sans-serif;font-size:17.3px;line-height:22px;font-weight:400;color:#4b5563;white-space:nowrap;left:1811px;letter-spacing:-0.058px;">2024 RE Tax</div>
<div class="a t" style="top:706.00px;font-family:'Liberation Mono', monospace;font-size:18.19px;line-height:24px;font-weight:700;color:#111827;white-space:nowrap;letter-spacing:-0.7140000000000007px;right:142px;">$48,200</div>
<div class="a" style="left:1811px;top:737.0px;width:433px;height:1.0px;background:#f3f4f6;"></div>
<div class="a t" style="top:750.00px;font-family:'Liberation Sans', sans-serif;font-size:17.3px;line-height:22px;font-weight:400;color:#4b5563;white-space:nowrap;left:1811px;letter-spacing:-0.135px;">RE Tax Amount Due</div>
<div class="a t" style="top:750.00px;font-family:'Liberation Mono', monospace;font-size:18.19px;line-height:24px;font-weight:700;color:#15803d;white-space:nowrap;letter-spacing:-0.7140000000000007px;right:142px;">$1,920</div>
<div class="a" style="left:1811px;top:781.8px;width:433px;height:1.0px;background:#f3f4f6;"></div>
<div class="a" style="left:1811px;top:794px;width:433px;height:2px;background:#e5e7eb;"></div>
<div class="a t" style="top:820.00px;font-family:'Liberation Sans', sans-serif;font-size:17.3px;line-height:22px;font-weight:700;color:#374151;white-space:nowrap;left:1811px;letter-spacing:-0.117px;">Total Amount Due</div>
<div class="a t" style="top:820.00px;font-family:'Liberation Mono', monospace;font-size:19.58px;line-height:25px;font-weight:700;color:#1d4ed8;white-space:nowrap;letter-spacing:-0.7686000000000014px;right:142px;">$9,300</div>
<div class="a" style="left:1787.4px;top:905px;width:479.5999999999999px;height:379.20000000000005px;background:#fff;border:1px solid #e5e7eb;border-radius:19px;box-shadow:0 1px 4px rgba(0,0,0,0.07),0 1px 2px rgba(0,0,0,0.03);"></div>
<div class="a" style="left:1787.4px;top:905px;width:479.5999999999999px;height:57.5px;background:#f9fafb;border:1px solid #e5e7eb;border-radius:19px;border-bottom-left-radius:0;border-bottom-right-radius:0;"></div>
<div class="a t" style="top:921.00px;font-family:'Liberation Sans', sans-serif;font-size:18.5px;line-height:24px;font-weight:700;color:#111827;white-space:nowrap;left:1811px;letter-spacing:-0.155px;">Intacct Integration Status</div>
<div class="a t" style="top:996.00px;font-family:'Liberation Sans', sans-serif;font-size:17.3px;line-height:22px;font-weight:400;color:#4b5563;white-space:nowrap;left:1811px;letter-spacing:0.056px;">Connection</div>
<div class="a t" style="top:996.00px;font-family:'Liberation Mono', monospace;font-size:18.19px;line-height:24px;font-weight:700;color:#15803d;white-space:nowrap;letter-spacing:-0.7140000000000007px;right:142px;">Connected</div>
<div class="a" style="left:1811px;top:1027.6px;width:433px;height:1.0px;background:#f3f4f6;"></div>
<div class="a t" style="top:1040.00px;font-family:'Liberation Sans', sans-serif;font-size:17.3px;line-height:22px;font-weight:400;color:#4b5563;white-space:nowrap;left:1811px;letter-spacing:0.036px;">Vendor</div>
<div class="a t" style="top:1040.00px;font-family:'Liberation Mono', monospace;font-size:18.19px;line-height:24px;font-weight:700;color:#111827;white-space:nowrap;letter-spacing:-0.7140000000000007px;right:142px;">Sage Intacct</div>
<div class="a" style="left:1811px;top:1071.7px;width:433px;height:1.0px;background:#f3f4f6;"></div>
<div class="a t" style="top:1084.00px;font-family:'Liberation Sans', sans-serif;font-size:17.3px;line-height:22px;font-weight:400;color:#4b5563;white-space:nowrap;left:1811px;letter-spacing:0.131px;">Subsidiary</div>
<div class="a t" style="top:1084.00px;font-family:'Liberation Mono', monospace;font-size:18.19px;line-height:24px;font-weight:700;color:#111827;white-space:nowrap;letter-spacing:-0.7140000000000007px;right:142px;">US-Corp</div>
<div class="a" style="left:1811px;top:1115.7px;width:433px;height:1.0px;background:#f3f4f6;"></div>
<div class="a t" style="top:1128.00px;font-family:'Liberation Sans', sans-serif;font-size:17.3px;line-height:22px;font-weight:400;color:#4b5563;white-space:nowrap;left:1811px;letter-spacing:0.075px;">Dimensions Defined</div>
<div class="a t" style="top:1128.00px;font-family:'Liberation Mono', monospace;font-size:18.19px;line-height:24px;font-weight:700;color:#111827;white-space:nowrap;letter-spacing:-0.7140000000000007px;right:142px;">4 of 8</div>
<div class="a" style="left:1811px;top:1159.8px;width:433px;height:1.0px;background:#f3f4f6;"></div>
<div class="a t" style="top:1172.00px;font-family:'Liberation Sans', sans-serif;font-size:17.3px;line-height:22px;font-weight:400;color:#4b5563;white-space:nowrap;left:1811px;letter-spacing:-0.263px;">GL Rows Mapped</div>
<div class="a t" style="top:1172.00px;font-family:'Liberation Mono', monospace;font-size:18.19px;line-height:24px;font-weight:700;color:#111827;white-space:nowrap;letter-spacing:-0.7140000000000007px;right:142px;">6 / 6</div>
<div class="a" style="left:1811px;top:1203.8px;width:433px;height:1.0px;background:#f3f4f6;"></div>
<div class="a" style="left:1811px;top:1225px;width:433px;height:37px;background:#fff;border:1px solid #d1d5db;border-radius:8px;"></div>
<div class="a t" style="top:1234.00px;font-family:'Liberation Sans', sans-serif;font-size:16.5px;line-height:21px;font-weight:700;color:#374151;white-space:nowrap;left:1828px;letter-spacing:-0.218px;">Upload Journal Entry</div>
<div class="a" style="left:1787.4px;top:1313.3px;width:479.5999999999999px;height:278.20000000000005px;background:#fff;border:1px solid #e5e7eb;border-radius:19px;box-shadow:0 1px 4px rgba(0,0,0,0.07),0 1px 2px rgba(0,0,0,0.03);"></div>
<div class="a" style="left:1787.4px;top:1313.3px;width:479.5999999999999px;height:59.0px;background:#f9fafb;border:1px solid #e5e7eb;border-radius:19px;border-bottom-left-radius:0;border-bottom-right-radius:0;"></div>
<div class="a t" style="top:1331.00px;font-family:'Liberation Sans', sans-serif;font-size:18.5px;line-height:24px;font-weight:700;color:#111827;white-space:nowrap;left:1811px;letter-spacing:-0.533px;">TI &amp; Cost Summary</div>
<div class="a t" style="top:1405.00px;font-family:'Liberation Sans', sans-serif;font-size:17.3px;line-height:22px;font-weight:400;color:#4b5563;white-space:nowrap;left:1811px;letter-spacing:0.302px;">TI Allowance (total)</div>
<div class="a t" style="top:1405.00px;font-family:'Liberation Mono', monospace;font-size:18.19px;line-height:24px;font-weight:700;color:#15803d;white-space:nowrap;letter-spacing:-0.7140000000000007px;right:142px;">$1,375,000</div>
<div class="a" style="left:1811px;top:1436.3px;width:433px;height:1.0px;background:#f3f4f6;"></div>
<div class="a t" style="top:1449.00px;font-family:'Liberation Sans', sans-serif;font-size:17.3px;line-height:22px;font-weight:400;color:#4b5563;white-space:nowrap;left:1811px;letter-spacing:-0.042px;">TI Expense</div>
<div class="a t" style="top:1449.00px;font-family:'Liberation Mono', monospace;font-size:18.19px;line-height:24px;font-weight:700;color:#b91c1c;white-space:nowrap;letter-spacing:-0.7140000000000007px;right:142px;">($1,250,000)</div>
<div class="a" style="left:1811px;top:1480.3999999999999px;width:433px;height:1.0px;background:#f3f4f6;"></div>
<div class="a t" style="top:1493.00px;font-family:'Liberation Sans', sans-serif;font-size:17.3px;line-height:22px;font-weight:400;color:#4b5563;white-space:nowrap;left:1811px;letter-spacing:-0.182px;">Other Lease Costs</div>
<div class="a t" style="top:1493.00px;font-family:'Liberation Mono', monospace;font-size:18.19px;line-height:24px;font-weight:700;color:#b91c1c;white-space:nowrap;letter-spacing:-0.7140000000000007px;right:142px;">($85,000)</div>
<div class="a" style="left:1811px;top:1524.3999999999999px;width:433px;height:1.0px;background:#f3f4f6;"></div>
<div class="a t" style="top:1537.00px;font-family:'Liberation Sans', sans-serif;font-size:17.3px;line-height:22px;font-weight:400;color:#4b5563;white-space:nowrap;left:1811px;letter-spacing:0.207px;">Net Cost Impact</div>
<div class="a t" style="top:1537.00px;font-family:'Liberation Mono', monospace;font-size:18.19px;line-height:24px;font-weight:700;color:#111827;white-space:nowrap;letter-spacing:-0.7140000000000007px;right:142px;">$40,000</div>
<div class="a" style="left:1787.4px;top:1621.6px;width:479.5999999999999px;height:273.9000000000001px;background:#fff;border:1px solid #e5e7eb;border-radius:19px;box-shadow:0 1px 4px rgba(0,0,0,0.07),0 1px 2px rgba(0,0,0,0.03);"></div>
<div class="a" style="left:1787.4px;top:1621.6px;width:479.5999999999999px;height:59.0px;background:#f9fafb;border:1px solid #e5e7eb;border-radius:19px;border-bottom-left-radius:0;border-bottom-right-radius:0;"></div>
<div class="a t" style="top:1638.00px;font-family:'Liberation Sans', sans-serif;font-size:18.5px;line-height:24px;font-weight:700;color:#111827;white-space:nowrap;left:1811px;letter-spacing:-0.607px;">Page Completion</div>
<div class="a t" style="top:1704.00px;font-family:'Liberation Sans', sans-serif;font-size:16px;line-height:21px;font-weight:400;color:#6b7280;white-space:nowrap;left:1811px;letter-spacing:-0.166px;">Expense Chargeback</div>
<div class="a t" style="top:1704.00px;font-family:'Liberation Sans', sans-serif;font-size:16px;line-height:21px;font-weight:700;color:#374151;white-space:nowrap;right:142px;letter-spacing:0.770px;">100%</div>
<div class="a" style="left:1811px;top:1734.0px;width:433px;height:7.7999999999999545px;background:#16a34a;border-radius:4px;"></div>
<div class="a t" style="top:1761.00px;font-family:'Liberation Sans', sans-serif;font-size:16px;line-height:21px;font-weight:400;color:#6b7280;white-space:nowrap;left:1811px;letter-spacing:-0.030px;">GL Dimension Mapping</div>
<div class="a t" style="top:1761.00px;font-family:'Liberation Sans', sans-serif;font-size:16px;line-height:21px;font-weight:700;color:#374151;white-space:nowrap;right:142px;letter-spacing:0.770px;">100%</div>
<div class="a" style="left:1811px;top:1791.1000000000001px;width:433px;height:7.7999999999999545px;background:#16a34a;border-radius:4px;"></div>
<div class="a t" style="top:1818.00px;font-family:'Liberation Sans', sans-serif;font-size:16px;line-height:21px;font-weight:400;color:#6b7280;white-space:nowrap;left:1811px;letter-spacing:-0.033px;">TI &amp; Cost Tracking</div>
<div class="a t" style="top:1818.00px;font-family:'Liberation Sans', sans-serif;font-size:16px;line-height:21px;font-weight:700;color:#374151;white-space:nowrap;right:142px;letter-spacing:0.770px;">100%</div>
<div class="a" style="left:1811px;top:1848.2px;width:433px;height:7.7999999999999545px;background:#16a34a;border-radius:4px;"></div>
<div class="a" style="left:1787.4px;top:1924px;width:479.5999999999999px;height:345px;background:#fff;border:1px solid #e5e7eb;border-radius:19px;box-shadow:0 1px 4px rgba(0,0,0,0.07),0 1px 2px rgba(0,0,0,0.03);"></div>
<div class="a" style="left:1787.4px;top:1924px;width:479.5999999999999px;height:59.299999999999955px;background:#f9fafb;border:1px solid #e5e7eb;border-radius:19px;border-bottom-left-radius:0;border-bottom-right-radius:0;"></div>
<div class="a t" style="top:1942.00px;font-family:'Liberation Sans', sans-serif;font-size:18.5px;line-height:24px;font-weight:700;color:#111827;white-space:nowrap;left:1811px;letter-spacing:-0.693px;">Quick Actions</div>
<div class="a" style="left:1811px;top:2005.2px;width:433px;height:51.299999999999955px;background:#fff;border:1px solid #e5e7eb;border-radius:8px;"></div>
<div class="a t" style="top:2020.00px;font-family:'Liberation Sans', sans-serif;font-size:17.5px;line-height:23px;font-weight:500;color:#374151;white-space:nowrap;left:1828.8px;letter-spacing:0.112px;">View Lease Accounting</div>
<div class="a t" style="top:2022.00px;font-family:'Liberation Sans', sans-serif;font-size:14px;line-height:18px;font-weight:400;color:#9ca3af;white-space:nowrap;left:1224px;width:2000px;text-align:center;">›</div>
<div class="a" style="left:1811px;top:2068.27px;width:433px;height:51.30000000000018px;background:#fff;border:1px solid #e5e7eb;border-radius:8px;"></div>
<div class="a t" style="top:2084.00px;font-family:'Liberation Sans', sans-serif;font-size:17.5px;line-height:23px;font-weight:500;color:#374151;white-space:nowrap;left:1828.8px;letter-spacing:0.075px;">Export Chargeback Report</div>
<div class="a t" style="top:2085.00px;font-family:'Liberation Sans', sans-serif;font-size:14px;line-height:18px;font-weight:400;color:#9ca3af;white-space:nowrap;left:1224px;width:2000px;text-align:center;">›</div>
<div class="a" style="left:1811px;top:2131.34px;width:433px;height:51.30000000000018px;background:#fff;border:1px solid #e5e7eb;border-radius:8px;"></div>
<div class="a t" style="top:2147.00px;font-family:'Liberation Sans', sans-serif;font-size:17.5px;line-height:23px;font-weight:500;color:#374151;white-space:nowrap;left:1828.8px;letter-spacing:0.392px;">Upload to Intacct</div>
<div class="a t" style="top:2148.00px;font-family:'Liberation Sans', sans-serif;font-size:14px;line-height:18px;font-weight:400;color:#9ca3af;white-space:nowrap;left:1224px;width:2000px;text-align:center;">›</div>
<div class="a" style="left:1811px;top:2194.41px;width:433px;height:51.30000000000018px;background:#fff;border:1px solid #e5e7eb;border-radius:8px;"></div>
<div class="a t" style="top:2210.00px;font-family:'Liberation Sans', sans-serif;font-size:17.5px;line-height:23px;font-weight:500;color:#374151;white-space:nowrap;left:1828.8px;letter-spacing:0.349px;">View Audit History</div>
<div class="a t" style="top:2211.00px;font-family:'Liberation Sans', sans-serif;font-size:14px;line-height:18px;font-weight:400;color:#9ca3af;white-space:nowrap;left:1224px;width:2000px;text-align:center;">›</div>
<div class="a" style="left:31px;top:1509px;width:1723px;height:1653px;background:#fff;border:1px solid #e5e7eb;border-radius:19px;box-shadow:0 1px 4px rgba(0,0,0,0.07),0 1px 2px rgba(0,0,0,0.03);"></div>
<div class="a" style="left:31px;top:1509px;width:1723px;height:88.79999999999995px;background:#f9fafb;border:1px solid #e5e7eb;border-radius:19px;border-bottom-left-radius:0;border-bottom-right-radius:0;"></div>
<div class="a t" style="top:1532.00px;font-family:'Liberation Sans', sans-serif;font-size:19.5px;line-height:25px;font-weight:700;color:#111827;white-space:nowrap;left:60px;letter-spacing:-0.798px;">GL Account Cost Center &amp; Dimension Mapping</div>
<div class="a t" style="top:1558.00px;font-family:'Liberation Sans', sans-serif;font-size:16px;line-height:21px;font-weight:400;color:#6b7280;white-space:nowrap;left:60px;letter-spacing:0.072px;">Assign cost centers or Sage Intacct dimensions to each GL account row for this lease's subsidiary</div>
<div class="a" style="left:1441px;top:1537px;width:243px;height:32.59999999999991px;background:#ccfbf1;border:1px solid #99f6e4;border-radius:8px;"></div>
<div class="a" style="left:1456.3px;top:1548.8px;width:9.0px;height:9.0px;background:#0f766e;border-radius:9px;"></div>
<div class="a t" style="top:1544.00px;font-family:'Liberation Sans', sans-serif;font-size:16px;line-height:21px;font-weight:700;color:#0f766e;white-space:nowrap;left:1474.5px;letter-spacing:-0.363px;">Dimensions Mode (Intacct)</div>
<div class="a" style="left:1700.5px;top:1542.0px;width:24.0px;height:24.0px;background:#e5e7eb;border-radius:24px;"></div>
<div class="a t" style="top:1545.00px;font-family:'Liberation Sans', sans-serif;font-size:13px;line-height:17px;font-weight:700;color:#4b5563;white-space:nowrap;left:712.5px;width:2000px;text-align:center;">?</div>
<div class="a" style="left:32px;top:1598.7px;width:1721px;height:84.70000000000005px;background:#f0fdfa;"></div>
<div class="a" style="left:32px;top:1683px;width:1721px;height:1px;background:#ccfbf1;"></div>
<div class="a t" style="top:1630.00px;font-family:'Liberation Sans', sans-serif;font-size:17.3px;line-height:22px;font-weight:700;color:#0f766e;white-space:nowrap;left:60px;letter-spacing:-0.346px;">Copy Dimensions from Another Lease:</div>
<div class="a" style="left:390px;top:1615.4px;width:448px;height:50.0px;background:#fff;border:1px solid #d1d5db;border-radius:7px;"></div>
<div class="a t" style="top:1630.00px;font-family:'Liberation Sans', sans-serif;font-size:17.5px;line-height:23px;font-weight:400;color:#111827;white-space:nowrap;left:413.4px;letter-spacing:-0.040px;">Select a lease in the same subsidiary...</div>
<svg class="a" style="left:811.2px;top:1633.5px" width="21.6" height="13.8"><polyline points="3,3 10.8,10.8 18.6,3" fill="none" stroke="#000" stroke-width="1.9" stroke-linecap="butt" stroke-linejoin="miter"/></svg>
<div class="a" style="left:871px;top:1625.5px;width:65.60000000000002px;height:29.90000000000009px;background:#fff;border:1px solid #d1d5db;border-radius:6px;"></div>
<div class="a t" style="top:1630.00px;font-family:'Liberation Sans', sans-serif;font-size:16px;line-height:21px;font-weight:700;color:#1f2937;white-space:nowrap;left:-96.20000000000005px;width:2000px;text-align:center;letter-spacing:-0.250px;">Copy</div>
<div class="a t" style="top:1630.00px;font-family:'Liberation Sans', sans-serif;font-size:16px;line-height:21px;font-weight:400;color:#6b7280;white-space:nowrap;left:976px;letter-spacing:0.092px;">Only leases in the same subsidiary with existing dimension assignments are shown.</div>
<div class="a" style="left:60px;top:1712px;width:1664.9px;height:87px;background:#eff6ff;border:1px solid #dbeafe;border-radius:8px;"></div>
<div class="a" style="left:82.5px;top:1734.8px;width:13.0px;height:13.0px;background:#3b82f6;border-radius:13px;"></div>
<div class="a t" style="top:1732.00px;font-family:'Liberation Sans', sans-serif;font-size:17.3px;line-height:22px;font-weight:400;color:#1d4ed8;white-space:nowrap;left:112.5px;letter-spacing:0.160px;">Dimension assignments drive journal entry routing in Sage Intacct. Each GL account row below maps to a specific JE line. Use “Fill Down” to apply the first row's selection to all rows within a dimension</div>
<div class="a t" style="top:1757.00px;font-family:'Liberation Sans', sans-serif;font-size:17.3px;line-height:22px;font-weight:400;color:#1d4ed8;white-space:nowrap;left:112.5px;letter-spacing:0.212px;">column.</div>
<div class="a t" style="top:1823.00px;font-family:'Liberation Sans', sans-serif;font-size:18px;line-height:23px;font-weight:700;color:#111827;white-space:nowrap;left:60px;letter-spacing:-0.562px;">Dimension Type Assignment</div>
<div class="a t" style="top:1857.00px;font-family:'Liberation Sans', sans-serif;font-size:16px;line-height:21px;font-weight:400;color:#6b7280;white-space:nowrap;left:60px;letter-spacing:0.078px;">Select the dimension type for each column. Changes apply to all rows.</div>
<div class="a t" style="top:1923.00px;font-family:'Liberation Sans', sans-serif;font-size:16px;line-height:21px;font-weight:400;color:#6b7280;white-space:nowrap;left:60px;letter-spacing:0.046px;">GL Account / Primary</div>
<div class="a t" style="top:1898.00px;font-family:'Liberation Sans', sans-serif;font-size:15px;line-height:20px;font-weight:700;color:#4b5563;white-space:nowrap;left:423px;letter-spacing:0.899px;">DIMENSION 1</div>
<div class="a" style="left:538.0px;top:1895.1000000000001px;width:23.59999999999991px;height:23.59999999999991px;background:#e5e7eb;border-radius:23.6px;"></div>
<div class="a t" style="top:1898.00px;font-family:'Liberation Sans', sans-serif;font-size:13px;line-height:17px;font-weight:700;color:#4b5563;white-space:nowrap;left:-450.20000000000005px;width:2000px;text-align:center;">?</div>
<div class="a" style="left:423px;top:1924.6px;width:316.6px;height:47.100000000000136px;background:#fff;border:1px solid #d1d5db;border-radius:7px;"></div>
<div class="a t" style="top:1938.00px;font-family:'Liberation Sans', sans-serif;font-size:17.3px;line-height:22px;font-weight:400;color:#111827;white-space:nowrap;left:446.7px;">Department</div>
<svg class="a" style="left:712.8000000000001px;top:1941.3px" width="21.6" height="13.8"><polyline points="3,3 10.8,10.8 18.6,3" fill="none" stroke="#000" stroke-width="1.9" stroke-linecap="butt" stroke-linejoin="miter"/></svg>
<div class="a" style="left:423px;top:1995.3px;width:316.6px;height:40.100000000000136px;background:#fffbeb;border:1px solid #fef3c7;border-radius:6px;"></div>
<div class="a t" style="top:2005.00px;font-family:'Liberation Sans', sans-serif;font-size:16.5px;line-height:21px;font-weight:600;color:#2563eb;white-space:nowrap;text-decoration:underline;text-underline-offset:3px;left:440.8px;letter-spacing:-0.548px;">Fill Down</div>
<div class="a t" style="top:2005.00px;font-family:'Liberation Sans', sans-serif;font-size:16.5px;line-height:21px;font-weight:400;color:#b45309;white-space:nowrap;left:521.6px;letter-spacing:-0.014px;">from row 1</div>
<div class="a t" style="top:1898.00px;font-family:'Liberation Sans', sans-serif;font-size:15px;line-height:20px;font-weight:700;color:#4b5563;white-space:nowrap;left:751px;letter-spacing:0.899px;">DIMENSION 2</div>
<div class="a" style="left:865.2px;top:1895.1000000000001px;width:23.59999999999991px;height:23.59999999999991px;background:#e5e7eb;border-radius:23.6px;"></div>
<div class="a t" style="top:1898.00px;font-family:'Liberation Sans', sans-serif;font-size:13px;line-height:17px;font-weight:700;color:#4b5563;white-space:nowrap;left:-123px;width:2000px;text-align:center;">?</div>
<div class="a" style="left:751px;top:1924.6px;width:316.5999999999999px;height:47.100000000000136px;background:#fff;border:1px solid #d1d5db;border-radius:7px;"></div>
<div class="a t" style="top:1938.00px;font-family:'Liberation Sans', sans-serif;font-size:17.3px;line-height:22px;font-weight:400;color:#111827;white-space:nowrap;left:774.7px;">Location</div>
<svg class="a" style="left:1040.8px;top:1941.3px" width="21.6" height="13.8"><polyline points="3,3 10.8,10.8 18.6,3" fill="none" stroke="#000" stroke-width="1.9" stroke-linecap="butt" stroke-linejoin="miter"/></svg>
<div class="a" style="left:751px;top:1995.3px;width:316.5999999999999px;height:40.100000000000136px;background:#fffbeb;border:1px solid #fef3c7;border-radius:6px;"></div>
<div class="a t" style="top:2005.00px;font-family:'Liberation Sans', sans-serif;font-size:16.5px;line-height:21px;font-weight:600;color:#2563eb;white-space:nowrap;text-decoration:underline;text-underline-offset:3px;left:768.8px;letter-spacing:-0.548px;">Fill Down</div>
<div class="a t" style="top:2005.00px;font-family:'Liberation Sans', sans-serif;font-size:16.5px;line-height:21px;font-weight:400;color:#b45309;white-space:nowrap;left:849.6px;letter-spacing:-0.014px;">from row 1</div>
<div class="a t" style="top:1898.00px;font-family:'Liberation Sans', sans-serif;font-size:15px;line-height:20px;font-weight:700;color:#4b5563;white-space:nowrap;left:1079.7px;letter-spacing:0.899px;">DIMENSION 3</div>
<div class="a" style="left:1194.3px;top:1895.1000000000001px;width:23.59999999999991px;height:23.59999999999991px;background:#e5e7eb;border-radius:23.6px;"></div>
<div class="a t" style="top:1898.00px;font-family:'Liberation Sans', sans-serif;font-size:13px;line-height:17px;font-weight:700;color:#4b5563;white-space:nowrap;left:206.0999999999999px;width:2000px;text-align:center;">?</div>
<div class="a" style="left:1079.7px;top:1924.6px;width:316.5999999999999px;height:47.100000000000136px;background:#fff;border:1px solid #d1d5db;border-radius:7px;"></div>
<div class="a t" style="top:1938.00px;font-family:'Liberation Sans', sans-serif;font-size:17.3px;line-height:22px;font-weight:400;color:#111827;white-space:nowrap;left:1103.4px;">Project</div>
<svg class="a" style="left:1369.5px;top:1941.3px" width="21.6" height="13.8"><polyline points="3,3 10.8,10.8 18.6,3" fill="none" stroke="#000" stroke-width="1.9" stroke-linecap="butt" stroke-linejoin="miter"/></svg>
<div class="a" style="left:1079.7px;top:1995.3px;width:316.5999999999999px;height:40.100000000000136px;background:#fffbeb;border:1px solid #fef3c7;border-radius:6px;"></div>
<div class="a t" style="top:2005.00px;font-family:'Liberation Sans', sans-serif;font-size:16.5px;line-height:21px;font-weight:600;color:#2563eb;white-space:nowrap;text-decoration:underline;text-underline-offset:3px;left:1097.5px;letter-spacing:-0.548px;">Fill Down</div>
<div class="a t" style="top:2005.00px;font-family:'Liberation Sans', sans-serif;font-size:16.5px;line-height:21px;font-weight:400;color:#b45309;white-space:nowrap;left:1178.3px;letter-spacing:-0.014px;">from row 1</div>
<div class="a t" style="top:1898.00px;font-family:'Liberation Sans', sans-serif;font-size:15px;line-height:20px;font-weight:700;color:#4b5563;white-space:nowrap;left:1408.2px;letter-spacing:0.899px;">DIMENSION 4</div>
<div class="a" style="left:1522.2px;top:1895.1000000000001px;width:23.59999999999991px;height:23.59999999999991px;background:#e5e7eb;border-radius:23.6px;"></div>
<div class="a t" style="top:1898.00px;font-family:'Liberation Sans', sans-serif;font-size:13px;line-height:17px;font-weight:700;color:#4b5563;white-space:nowrap;left:534px;width:2000px;text-align:center;">?</div>
<div class="a" style="left:1408.2px;top:1924.6px;width:316.5999999999999px;height:47.100000000000136px;background:#fff;border:1px solid #d1d5db;border-radius:7px;"></div>
<div class="a t" style="top:1938.00px;font-family:'Liberation Sans', sans-serif;font-size:17.3px;line-height:22px;font-weight:400;color:#111827;white-space:nowrap;left:1431.9px;">Cost Pool</div>
<svg class="a" style="left:1698.0px;top:1941.3px" width="21.6" height="13.8"><polyline points="3,3 10.8,10.8 18.6,3" fill="none" stroke="#000" stroke-width="1.9" stroke-linecap="butt" stroke-linejoin="miter"/></svg>
<div class="a" style="left:1408.2px;top:1995.3px;width:316.5999999999999px;height:40.100000000000136px;background:#fffbeb;border:1px solid #fef3c7;border-radius:6px;"></div>
<div class="a t" style="top:2005.00px;font-family:'Liberation Sans', sans-serif;font-size:16.5px;line-height:21px;font-weight:600;color:#2563eb;white-space:nowrap;text-decoration:underline;text-underline-offset:3px;left:1426.0px;letter-spacing:-0.548px;">Fill Down</div>
<div class="a t" style="top:2005.00px;font-family:'Liberation Sans', sans-serif;font-size:16.5px;line-height:21px;font-weight:400;color:#b45309;white-space:nowrap;left:1506.8px;letter-spacing:-0.014px;">from row 1</div>
<div class="a" style="left:60px;top:2047.2px;width:418px;height:47.100000000000136px;background:#1f2937;"></div>
<div class="a" style="left:478px;top:2047.2px;width:1246.8px;height:47.100000000000136px;background:#1d4ed8;"></div>
<div class="a t" style="top:2061.00px;font-family:'Liberation Sans', sans-serif;font-size:15px;line-height:20px;font-weight:700;color:#fff;white-space:nowrap;left:77px;letter-spacing:0.526px;">GL ACCOUNT / PRIMARY TYPE</div>
<div class="a t" style="top:2061.00px;font-family:'Liberation Sans', sans-serif;font-size:15px;line-height:20px;font-weight:700;color:#fff;white-space:nowrap;left:-367px;width:2000px;text-align:center;letter-spacing:0.294px;">DEPARTMENT</div>
<div class="a t" style="top:2061.00px;font-family:'Liberation Sans', sans-serif;font-size:15px;line-height:20px;font-weight:700;color:#fff;white-space:nowrap;left:-57.10000000000002px;width:2000px;text-align:center;letter-spacing:0.385px;">LOCATION</div>
<div class="a t" style="top:2061.00px;font-family:'Liberation Sans', sans-serif;font-size:15px;line-height:20px;font-weight:700;color:#fff;white-space:nowrap;left:256.20000000000005px;width:2000px;text-align:center;letter-spacing:0.106px;">PROJECT</div>
<div class="a t" style="top:2061.00px;font-family:'Liberation Sans', sans-serif;font-size:15px;line-height:20px;font-weight:700;color:#fff;white-space:nowrap;left:570.5px;width:2000px;text-align:center;letter-spacing:0.073px;">COST POOL</div>
<div class="a t" style="top:2106.00px;font-family:'Liberation Sans', sans-serif;font-size:17.3px;line-height:22px;font-weight:700;color:#1f2937;white-space:nowrap;left:77px;letter-spacing:-0.184px;">Right-of-Use Asset</div>
<div class="a t" style="top:2132.00px;font-family:'Liberation Mono', monospace;font-size:16.69px;line-height:22px;font-weight:400;color:#6b7280;white-space:nowrap;letter-spacing:-0.6552000000000003px;left:77px;">Subsidiary Cash: 1050-000</div>
<div class="a" style="left:77px;top:2155.6px;width:61.5px;height:25.0px;background:#ccfbf1;border-radius:5px;"></div>
<div class="a t" style="top:2159.00px;font-family:'Liberation Sans', sans-serif;font-size:14.5px;line-height:19px;font-weight:700;color:#0f766e;white-space:nowrap;left:-892.25px;width:2000px;text-align:center;letter-spacing:0.100px;">DEBIT</div>
<div class="a t" style="top:2186.00px;font-family:'Liberation Mono', monospace;font-size:15.52px;line-height:20px;font-weight:400;color:#9ca3af;white-space:nowrap;letter-spacing:-0.6090000000000003px;left:77px;">DimensionValues.DimensionValuesGLPrimaryType</div>
<div class="a t" style="top:2204.00px;font-family:'Liberation Mono', monospace;font-size:15.52px;line-height:20px;font-weight:400;color:#9ca3af;white-space:nowrap;letter-spacing:-0.6090000000000003px;left:77px;">= "ROU"</div>
<div class="a" style="left:494.5px;top:2129.5px;width:277.0px;height:46.5px;background:#fff;border:1px solid #d1d5db;border-radius:7px;"></div>
<div class="a t" style="top:2142.00px;font-family:'Liberation Sans', sans-serif;font-size:17.3px;line-height:22px;font-weight:400;color:#111827;white-space:nowrap;left:510.5px;">CORP - Corporate</div>
<svg class="a" style="left:744.2px;top:2146.2px" width="21.6" height="13.8"><polyline points="3,3 10.8,10.8 18.6,3" fill="none" stroke="#000" stroke-width="1.9" stroke-linecap="butt" stroke-linejoin="miter"/></svg>
<div class="a t" style="top:2181.00px;font-family:'Liberation Mono', monospace;font-size:15.52px;line-height:20px;font-weight:400;color:#9ca3af;white-space:nowrap;letter-spacing:-0.6090000000000003px;left:494.5px;">DimensionValues01ValuesCode</div>
<div class="a" style="left:806px;top:2129.5px;width:273.70000000000005px;height:46.5px;background:#fff;border:1px solid #d1d5db;border-radius:7px;"></div>
<div class="a t" style="top:2142.00px;font-family:'Liberation Sans', sans-serif;font-size:17.3px;line-height:22px;font-weight:400;color:#111827;white-space:nowrap;left:822px;">NYC - New York</div>
<svg class="a" style="left:1052.4px;top:2146.2px" width="21.6" height="13.8"><polyline points="3,3 10.8,10.8 18.6,3" fill="none" stroke="#000" stroke-width="1.9" stroke-linecap="butt" stroke-linejoin="miter"/></svg>
<div class="a t" style="top:2181.00px;font-family:'Liberation Mono', monospace;font-size:15.52px;line-height:20px;font-weight:400;color:#9ca3af;white-space:nowrap;letter-spacing:-0.6090000000000003px;left:806px;">DimensionValues02ValuesCode</div>
<div class="a" style="left:1114.3px;top:2129.5px;width:286.0px;height:46.5px;background:#fff;border:1px solid #d1d5db;border-radius:7px;"></div>
<div class="a t" style="top:2142.00px;font-family:'Liberation Sans', sans-serif;font-size:17.3px;line-height:22px;font-weight:400;color:#111827;white-space:nowrap;left:1130.3px;">P002 - Facilities</div>
<svg class="a" style="left:1373.0px;top:2146.2px" width="21.6" height="13.8"><polyline points="3,3 10.8,10.8 18.6,3" fill="none" stroke="#000" stroke-width="1.9" stroke-linecap="butt" stroke-linejoin="miter"/></svg>
<div class="a t" style="top:2181.00px;font-family:'Liberation Mono', monospace;font-size:15.52px;line-height:20px;font-weight:400;color:#9ca3af;white-space:nowrap;letter-spacing:-0.6090000000000003px;left:1114.3px;">DimensionValues03ValuesCode</div>
<div class="a" style="left:1434.5px;top:2129.5px;width:273.0px;height:46.5px;background:#fff;border:1px solid #d1d5db;border-radius:7px;"></div>
<div class="a t" style="top:2142.00px;font-family:'Liberation Sans', sans-serif;font-size:17.3px;line-height:22px;font-weight:400;color:#111827;white-space:nowrap;left:1450.5px;">FAC - Facilities</div>
<svg class="a" style="left:1680.2px;top:2146.2px" width="21.6" height="13.8"><polyline points="3,3 10.8,10.8 18.6,3" fill="none" stroke="#000" stroke-width="1.9" stroke-linecap="butt" stroke-linejoin="miter"/></svg>
<div class="a t" style="top:2181.00px;font-family:'Liberation Mono', monospace;font-size:15.52px;line-height:20px;font-weight:400;color:#9ca3af;white-space:nowrap;letter-spacing:-0.6090000000000003px;left:1434.5px;">DimensionValues04ValuesCode</div>
<div class="a" style="left:60px;top:2235.2999999999997px;width:1664.8px;height:1.0px;background:#f3f4f6;"></div>
<div class="a t" style="top:2248.00px;font-family:'Liberation Sans', sans-serif;font-size:17.3px;line-height:22px;font-weight:700;color:#1f2937;white-space:nowrap;left:77px;letter-spacing:-0.188px;">Accumulated Amortization - ROU</div>
<div class="a t" style="top:2274.00px;font-family:'Liberation Mono', monospace;font-size:16.69px;line-height:22px;font-weight:400;color:#6b7280;white-space:nowrap;letter-spacing:-0.6552000000000003px;left:77px;">1050-100</div>
<div class="a" style="left:77px;top:2297.45px;width:71.5px;height:25.0px;background:#fef3c7;border-radius:5px;"></div>
<div class="a t" style="top:2301.00px;font-family:'Liberation Sans', sans-serif;font-size:14.5px;line-height:19px;font-weight:700;color:#b45309;white-space:nowrap;left:-887.25px;width:2000px;text-align:center;letter-spacing:-0.164px;">CREDIT</div>
<div class="a t" style="top:2328.00px;font-family:'Liberation Mono', monospace;font-size:15.52px;line-height:20px;font-weight:400;color:#9ca3af;white-space:nowrap;letter-spacing:-0.6090000000000003px;left:77px;">DimensionValues.DimensionValuesGLPrimaryType</div>
<div class="a t" style="top:2346.00px;font-family:'Liberation Mono', monospace;font-size:15.52px;line-height:20px;font-weight:400;color:#9ca3af;white-space:nowrap;letter-spacing:-0.6090000000000003px;left:77px;">= "AccumAmort"</div>
<div class="a" style="left:494.5px;top:2271.35px;width:277.0px;height:46.5px;background:#fff;border:1px solid #d1d5db;border-radius:7px;"></div>
<div class="a t" style="top:2284.00px;font-family:'Liberation Sans', sans-serif;font-size:17.3px;line-height:22px;font-weight:400;color:#111827;white-space:nowrap;left:510.5px;">CORP - Corporate</div>
<svg class="a" style="left:744.2px;top:2288.0499999999997px" width="21.6" height="13.8"><polyline points="3,3 10.8,10.8 18.6,3" fill="none" stroke="#000" stroke-width="1.9" stroke-linecap="butt" stroke-linejoin="miter"/></svg>
<div class="a t" style="top:2323.00px;font-family:'Liberation Mono', monospace;font-size:15.52px;line-height:20px;font-weight:400;color:#9ca3af;white-space:nowrap;letter-spacing:-0.6090000000000003px;left:494.5px;">DimensionValues01ValuesCode</div>
<div class="a" style="left:806px;top:2271.35px;width:273.70000000000005px;height:46.5px;background:#fff;border:1px solid #d1d5db;border-radius:7px;"></div>
<div class="a t" style="top:2284.00px;font-family:'Liberation Sans', sans-serif;font-size:17.3px;line-height:22px;font-weight:400;color:#111827;white-space:nowrap;left:822px;">NYC - New York</div>
<svg class="a" style="left:1052.4px;top:2288.0499999999997px" width="21.6" height="13.8"><polyline points="3,3 10.8,10.8 18.6,3" fill="none" stroke="#000" stroke-width="1.9" stroke-linecap="butt" stroke-linejoin="miter"/></svg>
<div class="a t" style="top:2323.00px;font-family:'Liberation Mono', monospace;font-size:15.52px;line-height:20px;font-weight:400;color:#9ca3af;white-space:nowrap;letter-spacing:-0.6090000000000003px;left:806px;">DimensionValues02ValuesCode</div>
<div class="a" style="left:1114.3px;top:2271.35px;width:286.0px;height:46.5px;background:#fff;border:1px solid #d1d5db;border-radius:7px;"></div>
<div class="a t" style="top:2284.00px;font-family:'Liberation Sans', sans-serif;font-size:17.3px;line-height:22px;font-weight:400;color:#111827;white-space:nowrap;left:1130.3px;">P002 - Facilities</div>
<svg class="a" style="left:1373.0px;top:2288.0499999999997px" width="21.6" height="13.8"><polyline points="3,3 10.8,10.8 18.6,3" fill="none" stroke="#000" stroke-width="1.9" stroke-linecap="butt" stroke-linejoin="miter"/></svg>
<div class="a t" style="top:2323.00px;font-family:'Liberation Mono', monospace;font-size:15.52px;line-height:20px;font-weight:400;color:#9ca3af;white-space:nowrap;letter-spacing:-0.6090000000000003px;left:1114.3px;">DimensionValues03ValuesCode</div>
<div class="a" style="left:1434.5px;top:2271.35px;width:273.0px;height:46.5px;background:#fff;border:1px solid #d1d5db;border-radius:7px;"></div>
<div class="a t" style="top:2284.00px;font-family:'Liberation Sans', sans-serif;font-size:17.3px;line-height:22px;font-weight:400;color:#111827;white-space:nowrap;left:1450.5px;">FAC - Facilities</div>
<svg class="a" style="left:1680.2px;top:2288.0499999999997px" width="21.6" height="13.8"><polyline points="3,3 10.8,10.8 18.6,3" fill="none" stroke="#000" stroke-width="1.9" stroke-linecap="butt" stroke-linejoin="miter"/></svg>
<div class="a t" style="top:2323.00px;font-family:'Liberation Mono', monospace;font-size:15.52px;line-height:20px;font-weight:400;color:#9ca3af;white-space:nowrap;letter-spacing:-0.6090000000000003px;left:1434.5px;">DimensionValues04ValuesCode</div>
<div class="a" style="left:60px;top:2377.1499999999996px;width:1664.8px;height:1.0px;background:#f3f4f6;"></div>
<div class="a t" style="top:2390.00px;font-family:'Liberation Sans', sans-serif;font-size:17.3px;line-height:22px;font-weight:700;color:#1f2937;white-space:nowrap;left:77px;letter-spacing:-0.211px;">Lease Liability - Current</div>
<div class="a t" style="top:2416.00px;font-family:'Liberation Mono', monospace;font-size:16.69px;line-height:22px;font-weight:400;color:#6b7280;white-space:nowrap;letter-spacing:-0.6552000000000003px;left:77px;">2050-000</div>
<div class="a" style="left:77px;top:2439.2999999999997px;width:71.5px;height:25.0px;background:#fef3c7;border-radius:5px;"></div>
<div class="a t" style="top:2443.00px;font-family:'Liberation Sans', sans-serif;font-size:14.5px;line-height:19px;font-weight:700;color:#b45309;white-space:nowrap;left:-887.25px;width:2000px;text-align:center;letter-spacing:-0.164px;">CREDIT</div>
<div class="a t" style="top:2470.00px;font-family:'Liberation Mono', monospace;font-size:15.52px;line-height:20px;font-weight:400;color:#9ca3af;white-space:nowrap;letter-spacing:-0.6090000000000003px;left:77px;">DimensionValues.DimensionValuesGLPrimaryType</div>
<div class="a t" style="top:2488.00px;font-family:'Liberation Mono', monospace;font-size:15.52px;line-height:20px;font-weight:400;color:#9ca3af;white-space:nowrap;letter-spacing:-0.6090000000000003px;left:77px;">= "LiabilityCurrent"</div>
<div class="a" style="left:494.5px;top:2413.2px;width:277.0px;height:46.5px;background:#fff;border:1px solid #d1d5db;border-radius:7px;"></div>
<div class="a t" style="top:2425.00px;font-family:'Liberation Sans', sans-serif;font-size:17.3px;line-height:22px;font-weight:400;color:#111827;white-space:nowrap;left:510.5px;">CORP - Corporate</div>
<svg class="a" style="left:744.2px;top:2429.8999999999996px" width="21.6" height="13.8"><polyline points="3,3 10.8,10.8 18.6,3" fill="none" stroke="#000" stroke-width="1.9" stroke-linecap="butt" stroke-linejoin="miter"/></svg>
<div class="a t" style="top:2465.00px;font-family:'Liberation Mono', monospace;font-size:15.52px;line-height:20px;font-weight:400;color:#9ca3af;white-space:nowrap;letter-spacing:-0.6090000000000003px;left:494.5px;">DimensionValues01ValuesCode</div>
<div class="a" style="left:806px;top:2413.2px;width:273.70000000000005px;height:46.5px;background:#fff;border:1px solid #d1d5db;border-radius:7px;"></div>
<div class="a t" style="top:2425.00px;font-family:'Liberation Sans', sans-serif;font-size:17.3px;line-height:22px;font-weight:400;color:#111827;white-space:nowrap;left:822px;">NYC - New York</div>
<svg class="a" style="left:1052.4px;top:2429.8999999999996px" width="21.6" height="13.8"><polyline points="3,3 10.8,10.8 18.6,3" fill="none" stroke="#000" stroke-width="1.9" stroke-linecap="butt" stroke-linejoin="miter"/></svg>
<div class="a t" style="top:2465.00px;font-family:'Liberation Mono', monospace;font-size:15.52px;line-height:20px;font-weight:400;color:#9ca3af;white-space:nowrap;letter-spacing:-0.6090000000000003px;left:806px;">DimensionValues02ValuesCode</div>
<div class="a" style="left:1114.3px;top:2413.2px;width:286.0px;height:46.5px;background:#fff;border:1px solid #d1d5db;border-radius:7px;"></div>
<div class="a t" style="top:2425.00px;font-family:'Liberation Sans', sans-serif;font-size:17.3px;line-height:22px;font-weight:400;color:#111827;white-space:nowrap;left:1130.3px;">P002 - Facilities</div>
<svg class="a" style="left:1373.0px;top:2429.8999999999996px" width="21.6" height="13.8"><polyline points="3,3 10.8,10.8 18.6,3" fill="none" stroke="#000" stroke-width="1.9" stroke-linecap="butt" stroke-linejoin="miter"/></svg>
<div class="a t" style="top:2465.00px;font-family:'Liberation Mono', monospace;font-size:15.52px;line-height:20px;font-weight:400;color:#9ca3af;white-space:nowrap;letter-spacing:-0.6090000000000003px;left:1114.3px;">DimensionValues03ValuesCode</div>
<div class="a" style="left:1434.5px;top:2413.2px;width:273.0px;height:46.5px;background:#fff;border:1px solid #d1d5db;border-radius:7px;"></div>
<div class="a t" style="top:2425.00px;font-family:'Liberation Sans', sans-serif;font-size:17.3px;line-height:22px;font-weight:400;color:#111827;white-space:nowrap;left:1450.5px;">FAC - Facilities</div>
<svg class="a" style="left:1680.2px;top:2429.8999999999996px" width="21.6" height="13.8"><polyline points="3,3 10.8,10.8 18.6,3" fill="none" stroke="#000" stroke-width="1.9" stroke-linecap="butt" stroke-linejoin="miter"/></svg>
<div class="a t" style="top:2465.00px;font-family:'Liberation Mono', monospace;font-size:15.52px;line-height:20px;font-weight:400;color:#9ca3af;white-space:nowrap;letter-spacing:-0.6090000000000003px;left:1434.5px;">DimensionValues04ValuesCode</div>
<div class="a" style="left:60px;top:2518.9999999999995px;width:1664.8px;height:1.0px;background:#f3f4f6;"></div>
<div class="a t" style="top:2532.00px;font-family:'Liberation Sans', sans-serif;font-size:17.3px;line-height:22px;font-weight:700;color:#1f2937;white-space:nowrap;left:77px;letter-spacing:-0.159px;">Lease Liability - Non-Current</div>
<div class="a t" style="top:2558.00px;font-family:'Liberation Mono', monospace;font-size:16.69px;line-height:22px;font-weight:400;color:#6b7280;white-space:nowrap;letter-spacing:-0.6552000000000003px;left:77px;">2050-100</div>
<div class="a" style="left:77px;top:2581.15px;width:71.5px;height:25.0px;background:#fef3c7;border-radius:5px;"></div>
<div class="a t" style="top:2585.00px;font-family:'Liberation Sans', sans-serif;font-size:14.5px;line-height:19px;font-weight:700;color:#b45309;white-space:nowrap;left:-887.25px;width:2000px;text-align:center;letter-spacing:-0.164px;">CREDIT</div>
<div class="a t" style="top:2612.00px;font-family:'Liberation Mono', monospace;font-size:15.52px;line-height:20px;font-weight:400;color:#9ca3af;white-space:nowrap;letter-spacing:-0.6090000000000003px;left:77px;">DimensionValues.DimensionValuesGLPrimaryType</div>
<div class="a t" style="top:2630.00px;font-family:'Liberation Mono', monospace;font-size:15.52px;line-height:20px;font-weight:400;color:#9ca3af;white-space:nowrap;letter-spacing:-0.6090000000000003px;left:77px;">= "LiabilityNonCurrent"</div>
<div class="a" style="left:494.5px;top:2555.05px;width:277.0px;height:46.5px;background:#fff;border:1px solid #d1d5db;border-radius:7px;"></div>
<div class="a t" style="top:2567.00px;font-family:'Liberation Sans', sans-serif;font-size:17.3px;line-height:22px;font-weight:400;color:#111827;white-space:nowrap;left:510.5px;">CORP - Corporate</div>
<svg class="a" style="left:744.2px;top:2571.75px" width="21.6" height="13.8"><polyline points="3,3 10.8,10.8 18.6,3" fill="none" stroke="#000" stroke-width="1.9" stroke-linecap="butt" stroke-linejoin="miter"/></svg>
<div class="a t" style="top:2607.00px;font-family:'Liberation Mono', monospace;font-size:15.52px;line-height:20px;font-weight:400;color:#9ca3af;white-space:nowrap;letter-spacing:-0.6090000000000003px;left:494.5px;">DimensionValues01ValuesCode</div>
<div class="a" style="left:806px;top:2555.05px;width:273.70000000000005px;height:46.5px;background:#fff;border:1px solid #d1d5db;border-radius:7px;"></div>
<div class="a t" style="top:2567.00px;font-family:'Liberation Sans', sans-serif;font-size:17.3px;line-height:22px;font-weight:400;color:#111827;white-space:nowrap;left:822px;">NYC - New York</div>
<svg class="a" style="left:1052.4px;top:2571.75px" width="21.6" height="13.8"><polyline points="3,3 10.8,10.8 18.6,3" fill="none" stroke="#000" stroke-width="1.9" stroke-linecap="butt" stroke-linejoin="miter"/></svg>
<div class="a t" style="top:2607.00px;font-family:'Liberation Mono', monospace;font-size:15.52px;line-height:20px;font-weight:400;color:#9ca3af;white-space:nowrap;letter-spacing:-0.6090000000000003px;left:806px;">DimensionValues02ValuesCode</div>
<div class="a" style="left:1114.3px;top:2555.05px;width:286.0px;height:46.5px;background:#fff;border:1px solid #d1d5db;border-radius:7px;"></div>
<div class="a t" style="top:2567.00px;font-family:'Liberation Sans', sans-serif;font-size:17.3px;line-height:22px;font-weight:400;color:#111827;white-space:nowrap;left:1130.3px;">P002 - Facilities</div>
<svg class="a" style="left:1373.0px;top:2571.75px" width="21.6" height="13.8"><polyline points="3,3 10.8,10.8 18.6,3" fill="none" stroke="#000" stroke-width="1.9" stroke-linecap="butt" stroke-linejoin="miter"/></svg>
<div class="a t" style="top:2607.00px;font-family:'Liberation Mono', monospace;font-size:15.52px;line-height:20px;font-weight:400;color:#9ca3af;white-space:nowrap;letter-spacing:-0.6090000000000003px;left:1114.3px;">DimensionValues03ValuesCode</div>
<div class="a" style="left:1434.5px;top:2555.05px;width:273.0px;height:46.5px;background:#fff;border:1px solid #d1d5db;border-radius:7px;"></div>
<div class="a t" style="top:2567.00px;font-family:'Liberation Sans', sans-serif;font-size:17.3px;line-height:22px;font-weight:400;color:#111827;white-space:nowrap;left:1450.5px;">FAC - Facilities</div>
<svg class="a" style="left:1680.2px;top:2571.75px" width="21.6" height="13.8"><polyline points="3,3 10.8,10.8 18.6,3" fill="none" stroke="#000" stroke-width="1.9" stroke-linecap="butt" stroke-linejoin="miter"/></svg>
<div class="a t" style="top:2607.00px;font-family:'Liberation Mono', monospace;font-size:15.52px;line-height:20px;font-weight:400;color:#9ca3af;white-space:nowrap;letter-spacing:-0.6090000000000003px;left:1434.5px;">DimensionValues04ValuesCode</div>
<div class="a" style="left:60px;top:2660.85px;width:1664.8px;height:1.0px;background:#f3f4f6;"></div>
<div class="a t" style="top:2674.00px;font-family:'Liberation Sans', sans-serif;font-size:17.3px;line-height:22px;font-weight:700;color:#1f2937;white-space:nowrap;left:77px;letter-spacing:-0.250px;">Lease / Rent Expense</div>
<div class="a t" style="top:2700.00px;font-family:'Liberation Mono', monospace;font-size:16.69px;line-height:22px;font-weight:400;color:#6b7280;white-space:nowrap;letter-spacing:-0.6552000000000003px;left:77px;">6200-000</div>
<div class="a" style="left:77px;top:2723.0px;width:61.5px;height:25.0px;background:#ccfbf1;border-radius:5px;"></div>
<div class="a t" style="top:2727.00px;font-family:'Liberation Sans', sans-serif;font-size:14.5px;line-height:19px;font-weight:700;color:#0f766e;white-space:nowrap;left:-892.25px;width:2000px;text-align:center;letter-spacing:0.100px;">DEBIT</div>
<div class="a t" style="top:2753.00px;font-family:'Liberation Mono', monospace;font-size:15.52px;line-height:20px;font-weight:400;color:#9ca3af;white-space:nowrap;letter-spacing:-0.6090000000000003px;left:77px;">DimensionValues.DimensionValuesGLPrimaryType</div>
<div class="a t" style="top:2771.00px;font-family:'Liberation Mono', monospace;font-size:15.52px;line-height:20px;font-weight:400;color:#9ca3af;white-space:nowrap;letter-spacing:-0.6090000000000003px;left:77px;">= "LeaseExpense"</div>
<div class="a" style="left:494.5px;top:2696.9px;width:277.0px;height:46.5px;background:#fff;border:1px solid #d1d5db;border-radius:7px;"></div>
<div class="a t" style="top:2709.00px;font-family:'Liberation Sans', sans-serif;font-size:17.3px;line-height:22px;font-weight:400;color:#111827;white-space:nowrap;left:510.5px;">CORP - Corporate</div>
<svg class="a" style="left:744.2px;top:2713.6px" width="21.6" height="13.8"><polyline points="3,3 10.8,10.8 18.6,3" fill="none" stroke="#000" stroke-width="1.9" stroke-linecap="butt" stroke-linejoin="miter"/></svg>
<div class="a t" style="top:2749.00px;font-family:'Liberation Mono', monospace;font-size:15.52px;line-height:20px;font-weight:400;color:#9ca3af;white-space:nowrap;letter-spacing:-0.6090000000000003px;left:494.5px;">DimensionValues01ValuesCode</div>
<div class="a" style="left:806px;top:2696.9px;width:273.70000000000005px;height:46.5px;background:#fff;border:1px solid #d1d5db;border-radius:7px;"></div>
<div class="a t" style="top:2709.00px;font-family:'Liberation Sans', sans-serif;font-size:17.3px;line-height:22px;font-weight:400;color:#111827;white-space:nowrap;left:822px;">NYC - New York</div>
<svg class="a" style="left:1052.4px;top:2713.6px" width="21.6" height="13.8"><polyline points="3,3 10.8,10.8 18.6,3" fill="none" stroke="#000" stroke-width="1.9" stroke-linecap="butt" stroke-linejoin="miter"/></svg>
<div class="a t" style="top:2749.00px;font-family:'Liberation Mono', monospace;font-size:15.52px;line-height:20px;font-weight:400;color:#9ca3af;white-space:nowrap;letter-spacing:-0.6090000000000003px;left:806px;">DimensionValues02ValuesCode</div>
<div class="a" style="left:1114.3px;top:2696.9px;width:286.0px;height:46.5px;background:#fff;border:1px solid #d1d5db;border-radius:7px;"></div>
<div class="a t" style="top:2709.00px;font-family:'Liberation Sans', sans-serif;font-size:17.3px;line-height:22px;font-weight:400;color:#111827;white-space:nowrap;left:1130.3px;">P002 - Facilities</div>
<svg class="a" style="left:1373.0px;top:2713.6px" width="21.6" height="13.8"><polyline points="3,3 10.8,10.8 18.6,3" fill="none" stroke="#000" stroke-width="1.9" stroke-linecap="butt" stroke-linejoin="miter"/></svg>
<div class="a t" style="top:2749.00px;font-family:'Liberation Mono', monospace;font-size:15.52px;line-height:20px;font-weight:400;color:#9ca3af;white-space:nowrap;letter-spacing:-0.6090000000000003px;left:1114.3px;">DimensionValues03ValuesCode</div>
<div class="a" style="left:1434.5px;top:2696.9px;width:273.0px;height:46.5px;background:#fff;border:1px solid #d1d5db;border-radius:7px;"></div>
<div class="a t" style="top:2709.00px;font-family:'Liberation Sans', sans-serif;font-size:17.3px;line-height:22px;font-weight:400;color:#111827;white-space:nowrap;left:1450.5px;">FAC - Facilities</div>
<svg class="a" style="left:1680.2px;top:2713.6px" width="21.6" height="13.8"><polyline points="3,3 10.8,10.8 18.6,3" fill="none" stroke="#000" stroke-width="1.9" stroke-linecap="butt" stroke-linejoin="miter"/></svg>
<div class="a t" style="top:2749.00px;font-family:'Liberation Mono', monospace;font-size:15.52px;line-height:20px;font-weight:400;color:#9ca3af;white-space:nowrap;letter-spacing:-0.6090000000000003px;left:1434.5px;">DimensionValues04ValuesCode</div>
<div class="a" style="left:60px;top:2802.7px;width:1664.8px;height:1.0px;background:#f3f4f6;"></div>
<div class="a t" style="top:2816.00px;font-family:'Liberation Sans', sans-serif;font-size:17.3px;line-height:22px;font-weight:700;color:#1f2937;white-space:nowrap;left:77px;letter-spacing:-0.392px;">Accounts Payable</div>
<div class="a t" style="top:2841.00px;font-family:'Liberation Mono', monospace;font-size:16.69px;line-height:22px;font-weight:400;color:#6b7280;white-space:nowrap;letter-spacing:-0.6552000000000003px;left:77px;">2000-000</div>
<div class="a" style="left:77px;top:2864.85px;width:71.5px;height:25.0px;background:#fef3c7;border-radius:5px;"></div>
<div class="a t" style="top:2869.00px;font-family:'Liberation Sans', sans-serif;font-size:14.5px;line-height:19px;font-weight:700;color:#b45309;white-space:nowrap;left:-887.25px;width:2000px;text-align:center;letter-spacing:-0.164px;">CREDIT</div>
<div class="a t" style="top:2895.00px;font-family:'Liberation Mono', monospace;font-size:15.52px;line-height:20px;font-weight:400;color:#9ca3af;white-space:nowrap;letter-spacing:-0.6090000000000003px;left:77px;">Subsidiary.Subsidiary_Cash (AP GL from</div>
<div class="a t" style="top:2913.00px;font-family:'Liberation Mono', monospace;font-size:15.52px;line-height:20px;font-weight:400;color:#9ca3af;white-space:nowrap;letter-spacing:-0.6090000000000003px;left:77px;">Subsidiary)</div>
<div class="a" style="left:494.5px;top:2838.75px;width:277.0px;height:46.5px;background:#fff;border:1px solid #d1d5db;border-radius:7px;"></div>
<div class="a t" style="top:2851.00px;font-family:'Liberation Sans', sans-serif;font-size:17.3px;line-height:22px;font-weight:400;color:#111827;white-space:nowrap;left:510.5px;">CORP - Corporate</div>
<svg class="a" style="left:744.2px;top:2855.45px" width="21.6" height="13.8"><polyline points="3,3 10.8,10.8 18.6,3" fill="none" stroke="#000" stroke-width="1.9" stroke-linecap="butt" stroke-linejoin="miter"/></svg>
<div class="a t" style="top:2890.00px;font-family:'Liberation Mono', monospace;font-size:15.52px;line-height:20px;font-weight:400;color:#9ca3af;white-space:nowrap;letter-spacing:-0.6090000000000003px;left:494.5px;">DimensionValues01ValuesCode</div>
<div class="a" style="left:806px;top:2838.75px;width:273.70000000000005px;height:46.5px;background:#fff;border:1px solid #d1d5db;border-radius:7px;"></div>
<div class="a t" style="top:2851.00px;font-family:'Liberation Sans', sans-serif;font-size:17.3px;line-height:22px;font-weight:400;color:#111827;white-space:nowrap;left:822px;">NYC - New York</div>
<svg class="a" style="left:1052.4px;top:2855.45px" width="21.6" height="13.8"><polyline points="3,3 10.8,10.8 18.6,3" fill="none" stroke="#000" stroke-width="1.9" stroke-linecap="butt" stroke-linejoin="miter"/></svg>
<div class="a t" style="top:2890.00px;font-family:'Liberation Mono', monospace;font-size:15.52px;line-height:20px;font-weight:400;color:#9ca3af;white-space:nowrap;letter-spacing:-0.6090000000000003px;left:806px;">DimensionValues02ValuesCode</div>
<div class="a" style="left:1114.3px;top:2838.75px;width:286.0px;height:46.5px;background:#fff;border:1px solid #d1d5db;border-radius:7px;"></div>
<div class="a t" style="top:2851.00px;font-family:'Liberation Sans', sans-serif;font-size:17.3px;line-height:22px;font-weight:400;color:#111827;white-space:nowrap;left:1130.3px;">P002 - Facilities</div>
<svg class="a" style="left:1373.0px;top:2855.45px" width="21.6" height="13.8"><polyline points="3,3 10.8,10.8 18.6,3" fill="none" stroke="#000" stroke-width="1.9" stroke-linecap="butt" stroke-linejoin="miter"/></svg>
<div class="a t" style="top:2890.00px;font-family:'Liberation Mono', monospace;font-size:15.52px;line-height:20px;font-weight:400;color:#9ca3af;white-space:nowrap;letter-spacing:-0.6090000000000003px;left:1114.3px;">DimensionValues03ValuesCode</div>
<div class="a" style="left:1434.5px;top:2838.75px;width:273.0px;height:46.5px;background:#fff;border:1px solid #d1d5db;border-radius:7px;"></div>
<div class="a t" style="top:2851.00px;font-family:'Liberation Sans', sans-serif;font-size:17.3px;line-height:22px;font-weight:400;color:#111827;white-space:nowrap;left:1450.5px;">FAC - Facilities</div>
<svg class="a" style="left:1680.2px;top:2855.45px" width="21.6" height="13.8"><polyline points="3,3 10.8,10.8 18.6,3" fill="none" stroke="#000" stroke-width="1.9" stroke-linecap="butt" stroke-linejoin="miter"/></svg>
<div class="a t" style="top:2890.00px;font-family:'Liberation Mono', monospace;font-size:15.52px;line-height:20px;font-weight:400;color:#9ca3af;white-space:nowrap;letter-spacing:-0.6090000000000003px;left:1434.5px;">DimensionValues04ValuesCode</div>
<div class="a" style="left:60px;top:2944.5499999999997px;width:1664.8px;height:1.0px;background:#f3f4f6;"></div>
<div class="a t" style="top:2968.00px;font-family:'Liberation Sans', sans-serif;font-size:16px;line-height:21px;font-weight:400;color:#6b7280;white-space:nowrap;left:60px;letter-spacing:0.052px;">GL account rows are defined on the <span style="color:#2563eb;text-decoration:underline">Lease Accounting</span> page under GL Account Setup. The rows shown here are driven by the lease’s accounting method and subsidiary configuration. Dimension values are sourced from</div>
<div class="a t" style="top:2989.00px;font-family:'Liberation Sans', sans-serif;font-size:16px;line-height:21px;font-weight:400;color:#6b7280;white-space:nowrap;left:60px;letter-spacing:0.094px;"><span style="font-family:Liberation Mono;color:#374151">DimensionTypesLu</span> filtered by <span style="font-family:Liberation Mono;color:#374151">DimensionTypesLuTypeId</span> matching each column header.</div>
<div class="a" style="left:60px;top:3026.6px;width:1664.8px;height:106.70000000000027px;background:#fffbeb;border:1px solid #fcebb6;border-radius:8px;"></div>
<div class="a t" style="top:3048.00px;font-family:'Liberation Sans', sans-serif;font-size:17px;line-height:22px;font-weight:400;color:#b45309;white-space:nowrap;left:80.7px;letter-spacing:-0.079px;"><b>V2 Enhancement Note:</b> The current DimensionValues schema stores dimension columns 1–8 as fixed column pairs (DimensionValues0NValuesTypeId / DimensionValues0NValuesCode). This is adequate for up to 8</div>
<div class="a t" style="top:3070.00px;font-family:'Liberation Sans', sans-serif;font-size:17px;line-height:22px;font-weight:400;color:#b45309;white-space:nowrap;left:80.7px;letter-spacing:-0.051px;">dimensions. No schema changes needed unless the 8-dimension limit is exceeded. The dimension column header type selectors are stored per account session; consider adding a</div>
<div class="a t" style="top:3091.00px;font-family:'Liberation Sans', sans-serif;font-size:17px;line-height:22px;font-weight:400;color:#b45309;white-space:nowrap;left:80.7px;letter-spacing:-0.035px;"><span style="font-family:Liberation Mono">DimensionValuesColumnTypeConfig</span> table if per-lease type overrides are needed in the future.</div>
<div class="a" style="left:31px;top:3191.7px;width:1723px;height:667.3000000000002px;background:#fff;border:1px solid #e5e7eb;border-radius:19px;box-shadow:0 1px 4px rgba(0,0,0,0.07),0 1px 2px rgba(0,0,0,0.03);"></div>
<div class="a" style="left:31px;top:3191.7px;width:1723px;height:88.80000000000018px;background:#f9fafb;border:1px solid #e5e7eb;border-radius:19px;border-bottom-left-radius:0;border-bottom-right-radius:0;"></div>
<div class="a t" style="top:3212.00px;font-family:'Liberation Sans', sans-serif;font-size:19.5px;line-height:25px;font-weight:700;color:#111827;white-space:nowrap;left:60px;letter-spacing:-0.594px;">Tenant Improvement &amp; Other Lease Costs</div>
<div class="a t" style="top:3238.00px;font-family:'Liberation Sans', sans-serif;font-size:16px;line-height:21px;font-weight:400;color:#6b7280;white-space:nowrap;left:60px;letter-spacing:0.108px;">Track TI allowances, tenant improvement expenditures, and other lease-related costs (Real Estate leases)</div>
<div class="a" style="left:1700.9px;top:3223.0px;width:24.0px;height:24.0px;background:#e5e7eb;border-radius:24px;"></div>
<div class="a t" style="top:3226.00px;font-family:'Liberation Sans', sans-serif;font-size:13px;line-height:17px;font-weight:700;color:#4b5563;white-space:nowrap;left:712.9000000000001px;width:2000px;text-align:center;">?</div>
<div class="a t" style="top:3312.00px;font-family:'Liberation Sans', sans-serif;font-size:14px;line-height:18px;font-weight:700;color:#4b5563;white-space:nowrap;left:60px;letter-spacing:0.961px;">TI ALLOWANCE (PER SF)</div>
<div class="a" style="left:256.9px;top:3307.7px;width:23.600000000000023px;height:23.600000000000364px;background:#e5e7eb;border-radius:23.6px;"></div>
<div class="a t" style="top:3310.00px;font-family:'Liberation Sans', sans-serif;font-size:13px;line-height:17px;font-weight:700;color:#4b5563;white-space:nowrap;left:-731.3px;width:2000px;text-align:center;">?</div>
<div class="a" style="left:60px;top:3339.6px;width:398.5px;height:56.0px;background:#fff;border:1px solid #d1d5db;border-radius:8px;"></div>
<div class="a t" style="top:3356.00px;font-family:'Liberation Sans', sans-serif;font-size:18.5px;line-height:24px;font-weight:400;color:#1f2937;white-space:nowrap;left:77.2px;">$55.00</div>
<div class="a t" style="top:3405.00px;font-family:'Liberation Mono', monospace;font-size:15.52px;line-height:20px;font-weight:400;color:#9ca3af;white-space:nowrap;letter-spacing:-0.6090000000000003px;left:60px;">Leases.LeasesTiAllowance</div>
<div class="a t" style="top:3312.00px;font-family:'Liberation Sans', sans-serif;font-size:14px;line-height:18px;font-weight:700;color:#4b5563;white-space:nowrap;left:481.5px;letter-spacing:0.970px;">TI EXPENSE (TOTAL)</div>
<div class="a" style="left:647.7px;top:3307.7px;width:23.59999999999991px;height:23.600000000000364px;background:#e5e7eb;border-radius:23.6px;"></div>
<div class="a t" style="top:3310.00px;font-family:'Liberation Sans', sans-serif;font-size:13px;line-height:17px;font-weight:700;color:#4b5563;white-space:nowrap;left:-340.5px;width:2000px;text-align:center;">?</div>
<div class="a" style="left:481.5px;top:3339.6px;width:399.0px;height:56.0px;background:#fff;border:1px solid #d1d5db;border-radius:8px;"></div>
<div class="a t" style="top:3356.00px;font-family:'Liberation Sans', sans-serif;font-size:18.5px;line-height:24px;font-weight:400;color:#1f2937;white-space:nowrap;left:498.7px;">$1,250,000</div>
<div class="a t" style="top:3405.00px;font-family:'Liberation Mono', monospace;font-size:15.52px;line-height:20px;font-weight:400;color:#9ca3af;white-space:nowrap;letter-spacing:-0.6090000000000003px;left:481.5px;">Leases.LeasesTiExpense</div>
<div class="a t" style="top:3312.00px;font-family:'Liberation Sans', sans-serif;font-size:14px;line-height:18px;font-weight:700;color:#4b5563;white-space:nowrap;left:903.3px;letter-spacing:1.335px;">TI AMORTIZATION (MONTHS)</div>
<div class="a" style="left:1138.9px;top:3307.7px;width:23.59999999999991px;height:23.600000000000364px;background:#e5e7eb;border-radius:23.6px;"></div>
<div class="a t" style="top:3310.00px;font-family:'Liberation Sans', sans-serif;font-size:13px;line-height:17px;font-weight:700;color:#4b5563;white-space:nowrap;left:150.70000000000005px;width:2000px;text-align:center;">?</div>
<div class="a" style="left:903.3px;top:3339.6px;width:399.4000000000001px;height:56.0px;background:#fff;border:1px solid #d1d5db;border-radius:8px;"></div>
<div class="a t" style="top:3356.00px;font-family:'Liberation Sans', sans-serif;font-size:18.5px;line-height:24px;font-weight:400;color:#1f2937;white-space:nowrap;left:920.5px;">120</div>
<div class="a t" style="top:3405.00px;font-family:'Liberation Mono', monospace;font-size:15.52px;line-height:20px;font-weight:400;color:#9ca3af;white-space:nowrap;letter-spacing:-0.6090000000000003px;left:903.3px;">Leases.LeasesTiExpenseAmtMonths</div>
<div class="a t" style="top:3312.00px;font-family:'Liberation Sans', sans-serif;font-size:14px;line-height:18px;font-weight:700;color:#4b5563;white-space:nowrap;left:1325.4px;letter-spacing:0.648px;">OTHER LEASE COSTS</div>
<div class="a" style="left:1494.8px;top:3307.7px;width:23.59999999999991px;height:23.600000000000364px;background:#e5e7eb;border-radius:23.6px;"></div>
<div class="a t" style="top:3310.00px;font-family:'Liberation Sans', sans-serif;font-size:13px;line-height:17px;font-weight:700;color:#4b5563;white-space:nowrap;left:506.5999999999999px;width:2000px;text-align:center;">?</div>
<div class="a" style="left:1325.4px;top:3339.6px;width:399.39999999999986px;height:56.0px;background:#fff;border:1px solid #d1d5db;border-radius:8px;"></div>
<div class="a t" style="top:3356.00px;font-family:'Liberation Sans', sans-serif;font-size:18.5px;line-height:24px;font-weight:400;color:#1f2937;white-space:nowrap;left:1342.6000000000001px;">$85,000</div>
<div class="a t" style="top:3405.00px;font-family:'Liberation Mono', monospace;font-size:15.52px;line-height:20px;font-weight:400;color:#9ca3af;white-space:nowrap;letter-spacing:-0.6090000000000003px;left:1325.4px;">Leases.LeasesOtherLeaseCosts</div>
<div class="a t" style="top:3450.00px;font-family:'Liberation Sans', sans-serif;font-size:14px;line-height:18px;font-weight:700;color:#4b5563;white-space:nowrap;left:60px;letter-spacing:1.059px;">OTHER COST AMORTIZATION (MO.)</div>
<div class="a" style="left:338.8px;top:3446.7999999999997px;width:23.600000000000023px;height:23.600000000000364px;background:#e5e7eb;border-radius:23.6px;"></div>
<div class="a t" style="top:3450.00px;font-family:'Liberation Sans', sans-serif;font-size:13px;line-height:17px;font-weight:700;color:#4b5563;white-space:nowrap;left:-649.4px;width:2000px;text-align:center;">?</div>
<div class="a" style="left:60px;top:3477.5px;width:398.5px;height:56.5px;background:#fff;border:1px solid #d1d5db;border-radius:8px;"></div>
<div class="a t" style="top:3494.00px;font-family:'Liberation Sans', sans-serif;font-size:18.5px;line-height:24px;font-weight:400;color:#1f2937;white-space:nowrap;left:77.2px;">120</div>
<div class="a t" style="top:3544.00px;font-family:'Liberation Mono', monospace;font-size:15.52px;line-height:20px;font-weight:400;color:#9ca3af;white-space:nowrap;letter-spacing:-0.6090000000000003px;left:60px;">Leases.LeasesOtherLeaseCostsAmtMonths</div>
<div class="a t" style="top:3450.00px;font-family:'Liberation Sans', sans-serif;font-size:14px;line-height:18px;font-weight:700;color:#4b5563;white-space:nowrap;left:481.5px;letter-spacing:1.000px;">DISCOUNT RATE FOR ANALYSIS</div>
<div class="a" style="left:735.5px;top:3446.7999999999997px;width:23.59999999999991px;height:23.600000000000364px;background:#e5e7eb;border-radius:23.6px;"></div>
<div class="a t" style="top:3450.00px;font-family:'Liberation Sans', sans-serif;font-size:13px;line-height:17px;font-weight:700;color:#4b5563;white-space:nowrap;left:-252.70000000000005px;width:2000px;text-align:center;">?</div>
<div class="a" style="left:481.5px;top:3477.5px;width:399.0px;height:56.5px;background:#fff;border:1px solid #d1d5db;border-radius:8px;"></div>
<div class="a t" style="top:3494.00px;font-family:'Liberation Sans', sans-serif;font-size:18.5px;line-height:24px;font-weight:400;color:#1f2937;white-space:nowrap;left:498.7px;">6.50%</div>
<div class="a t" style="top:3544.00px;font-family:'Liberation Mono', monospace;font-size:15.52px;line-height:20px;font-weight:400;color:#9ca3af;white-space:nowrap;letter-spacing:-0.6090000000000003px;left:481.5px;">Leases.LeasesDiscountRate</div>
<div class="a" style="left:60px;top:3591px;width:1664.8px;height:1px;background:#e5e7eb;"></div>
<div class="a t" style="top:3620.00px;font-family:'Liberation Sans', sans-serif;font-size:17.5px;line-height:23px;font-weight:700;color:#1f2937;white-space:nowrap;left:60px;letter-spacing:-0.240px;">Computed TI Summary</div>
<div class="a t" style="top:3666.00px;font-family:'Liberation Sans', sans-serif;font-size:17.3px;line-height:22px;font-weight:400;color:#4b5563;white-space:nowrap;left:60px;letter-spacing:0.242px;">Total TI Allowance (25,000 SF × $55.00)</div>
<div class="a t" style="top:3666.00px;font-family:'Liberation Mono', monospace;font-size:18.54px;line-height:24px;font-weight:700;color:#111827;white-space:nowrap;letter-spacing:-0.7278600000000004px;right:1508.4px;">$1,375,000</div>
<div class="a t" style="top:3710.00px;font-family:'Liberation Sans', sans-serif;font-size:17.3px;line-height:22px;font-weight:400;color:#4b5563;white-space:nowrap;left:60px;letter-spacing:0.018px;">TI Expense</div>
<div class="a t" style="top:3711.00px;font-family:'Liberation Mono', monospace;font-size:18.54px;line-height:24px;font-weight:700;color:#b91c1c;white-space:nowrap;letter-spacing:-0.7278600000000004px;right:1508.4px;">($1,250,000)</div>
<div class="a t" style="top:3754.00px;font-family:'Liberation Sans', sans-serif;font-size:17.3px;line-height:22px;font-weight:400;color:#4b5563;white-space:nowrap;left:60px;letter-spacing:0.190px;">Net TI (Surplus / Deficit)</div>
<div class="a t" style="top:3755.00px;font-family:'Liberation Mono', monospace;font-size:18.54px;line-height:24px;font-weight:700;color:#15803d;white-space:nowrap;letter-spacing:-0.7278600000000004px;right:1508.4px;">$125,000</div>
<div class="a" style="left:60px;top:3698.4px;width:817.6px;height:1.0px;background:#f3f4f6;"></div>
<div class="a" style="left:60px;top:3742.2px;width:817.6px;height:1.0px;background:#f3f4f6;"></div>
<div class="a t" style="top:3620.00px;font-family:'Liberation Sans', sans-serif;font-size:17.5px;line-height:23px;font-weight:700;color:#1f2937;white-space:nowrap;left:906.5px;letter-spacing:-0.386px;">Effective Lease Cost Summary</div>
<div class="a t" style="top:3665.00px;font-family:'Liberation Sans', sans-serif;font-size:17.3px;line-height:22px;font-weight:400;color:#4b5563;white-space:nowrap;left:906.5px;letter-spacing:-0.002px;">Total Lease Payments</div>
<div class="a t" style="top:3665.00px;font-family:'Liberation Mono', monospace;font-size:18.19px;line-height:24px;font-weight:700;color:#111827;white-space:nowrap;letter-spacing:-0.7140000000000007px;right:661px;">$8,960,000</div>
<div class="a t" style="top:3709.00px;font-family:'Liberation Sans', sans-serif;font-size:17.3px;line-height:22px;font-weight:400;color:#4b5563;white-space:nowrap;left:906.5px;letter-spacing:0.033px;">Less: Free Rent / TI Allowance</div>
<div class="a t" style="top:3709.00px;font-family:'Liberation Mono', monospace;font-size:18.19px;line-height:24px;font-weight:700;color:#15803d;white-space:nowrap;letter-spacing:-0.7140000000000007px;right:661px;">$1,555,000</div>
<div class="a t" style="top:3753.00px;font-family:'Liberation Sans', sans-serif;font-size:17.3px;line-height:22px;font-weight:400;color:#4b5563;white-space:nowrap;left:906.5px;letter-spacing:-0.055px;">Plus: TI Expense &amp; Other Costs</div>
<div class="a t" style="top:3753.00px;font-family:'Liberation Mono', monospace;font-size:18.19px;line-height:24px;font-weight:700;color:#b91c1c;white-space:nowrap;letter-spacing:-0.7140000000000007px;right:661px;">$1,335,000</div>
<div class="a t" style="top:3798.00px;font-family:'Liberation Sans', sans-serif;font-size:17.3px;line-height:22px;font-weight:400;color:#4b5563;white-space:nowrap;left:906.5px;letter-spacing:0.124px;">Net Effective Rent (Total)</div>
<div class="a t" style="top:3798.00px;font-family:'Liberation Mono', monospace;font-size:19.58px;line-height:25px;font-weight:700;color:#1d4ed8;white-space:nowrap;letter-spacing:-0.7686000000000014px;right:661px;">$8,740,000</div>
<div class="a" style="left:906.5px;top:3698.2px;width:818.5px;height:1.0px;background:#f3f4f6;"></div>
<div class="a" style="left:906.5px;top:3742.2px;width:818.5px;height:1.0px;background:#f3f4f6;"></div>
<div class="a" style="left:906.5px;top:3786px;width:818.5px;height:1px;background:#f3f4f6;"></div>
<div class="a" style="left:0px;top:3967px;width:2386px;height:108px;background:#fff;"></div>
<div class="a" style="left:0px;top:3967px;width:2386px;height:1px;background:#e5e7eb;"></div>
<div class="a" style="left:-3px;top:3993.3px;width:143.2px;height:36.29999999999973px;background:#fff;border:1px solid #d1d5db;border-radius:8px;"></div>
<div class="a t" style="top:4001.00px;font-family:'Liberation Sans', sans-serif;font-size:17px;line-height:22px;font-weight:700;color:#374151;white-space:nowrap;left:14px;letter-spacing:-0.561px;">Save Changes</div>
<div class="a t" style="top:4001.00px;font-family:'Liberation Sans', sans-serif;font-size:17px;line-height:22px;font-weight:700;color:#6b7280;white-space:nowrap;left:173.2px;letter-spacing:-0.467px;">Back to Supplemental Details</div>
<div class="a" style="left:2009.6px;top:3990.8px;width:291.8000000000002px;height:42.899999999999636px;background:#2563eb;border-radius:8px;"></div>
<div class="a t" style="top:4002.00px;font-family:'Liberation Sans', sans-serif;font-size:17px;line-height:22px;font-weight:700;color:#fff;white-space:nowrap;left:1155.5px;width:2000px;text-align:center;letter-spacing:0.198px;">Save &amp; Continue to Analysis ›</div>
</body></html>
